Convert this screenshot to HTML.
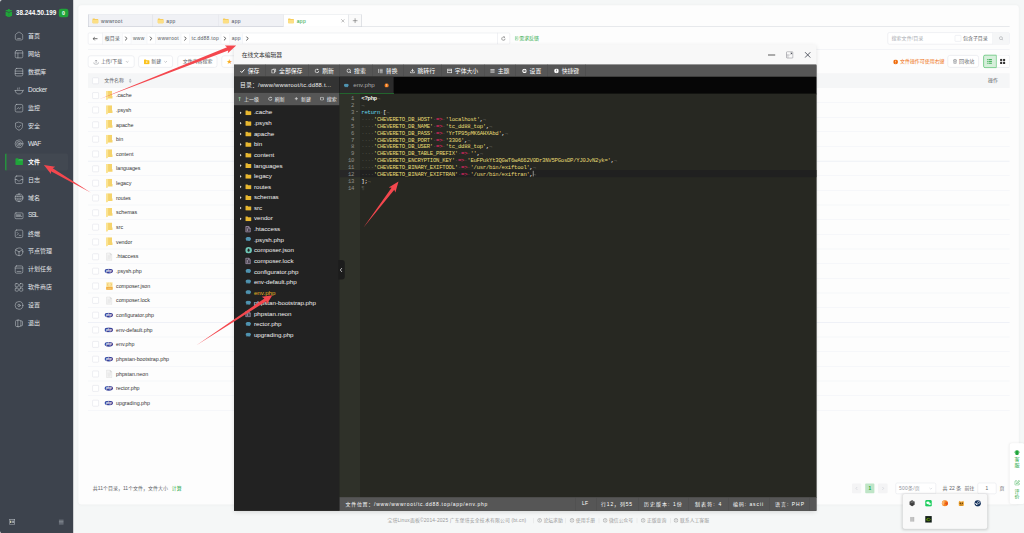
<!DOCTYPE html>
<html lang="zh-CN"><head><meta charset="utf-8"><title>宝塔Linux面板</title>
<style>
html,body{margin:0;padding:0;width:1024px;height:533px;overflow:hidden;background:#f5f7f7;}
#stage{position:absolute;left:0;top:0;width:2560px;height:1332.5px;transform:scale(.4);transform-origin:0 0;background:#f5f7f7;overflow:hidden;font-family:"Liberation Sans","Noto Sans CJK SC",sans-serif;}
.a{position:absolute;}
.t{white-space:nowrap;}
.code{font-family:"Liberation Mono",monospace;font-weight:normal;white-space:pre;}
.code i{font-style:normal;color:#55564f;font-weight:normal;}
.code s{text-decoration:none;color:#e6db74;}
.code b{color:#f92672;font-weight:normal;}
.code em{font-style:normal;color:#66d9ef;}
.code u{text-decoration:none;color:#f8f8f2;font-weight:bold;}
</style></head><body><div id="stage">
<div class="a " style="left:0.00px;top:0.00px;width:12.50px;height:1332.50px;background:#fff;"></div>
<div class="a " style="left:0.00px;top:0.00px;width:182.75px;height:1332.50px;background:#3d434d;border-radius:5.50px 0 0 5.50px;"></div>
<svg class="a" style="left:12.00px;top:22.00px;width:20.25px;height:21.50px;" viewBox="0 0 14 16"><path d="M7 0.5c1.2 0 2 .8 2 1.8 1.8-.6 4 .2 4.6 1.2L7 6 .4 3.5C1 2.5 3.2 1.7 5 2.3 5 1.3 5.8.5 7 .5z" fill="#20a53a"/><path d="M1 5l6 2.2L13 5v8l-6 2.6L1 13z" fill="#20a53a"/><path d="M7 7.2V15.6" stroke="#178a2f" stroke-width=".8"/></svg>
<div class="a t " style="left:40.00px;top:20.50px;height:23.62px;line-height:23.62px;font-size:15.75px;color:#fff;letter-spacing:0.001px;font-weight:bold;">38.244.50.199</div>
<div class="a " style="left:146.75px;top:22.00px;width:24.25px;height:20.75px;background:#20a53a;border-radius:5.75px;"></div>
<div class="a t " style="left:158.88px;transform:translateX(-50%);top:23.52px;height:19.88px;line-height:19.88px;font-size:13.25px;color:#fff;font-weight:bold;">0</div>
<svg class="a" style="left:34.00px;top:77.38px;width:27.00px;height:27.00px;" viewBox="0 0 20 20"><g fill="none" stroke="#c9cdd2" stroke-width="0.95" stroke-linecap="round" stroke-linejoin="round"><path d="M3.2 8.2C3.2 7 3.6 6.5 4.4 5.9L8.6 2.9c.9-.6 1.9-.6 2.8 0l4.2 3c.8.6 1.2 1.1 1.2 2.3v6.300c0 1.500-1 2.500-2.500 2.500H5.700c-1.500 0-2.500-1-2.500-2.500z"/><path d="M7.500 14.200h5"/></g></svg>
<div class="a t " style="left:70.00px;top:79.00px;height:22.50px;line-height:22.50px;font-size:15.00px;color:#e4e6e9;">首页</div>
<svg class="a" style="left:34.00px;top:122.23px;width:27.00px;height:27.00px;" viewBox="0 0 20 20"><g fill="none" stroke="#c9cdd2" stroke-width="0.95" stroke-linecap="round" stroke-linejoin="round"><rect x="3" y="3.200" width="14" height="13.600" rx="2.600"/><path d="M3 7.800h14M8 7.800v9"/></g></svg>
<div class="a t " style="left:70.00px;top:124.01px;height:22.50px;line-height:22.50px;font-size:15.00px;color:#e4e6e9;">网站</div>
<svg class="a" style="left:34.00px;top:167.07px;width:27.00px;height:27.00px;" viewBox="0 0 20 20"><g fill="none" stroke="#c9cdd2" stroke-width="0.95" stroke-linecap="round" stroke-linejoin="round"><rect x="3" y="3" width="14" height="14" rx="2.800"/><path d="M3 8h14M3 12.400h14"/></g></svg>
<div class="a t " style="left:70.00px;top:169.01px;height:22.50px;line-height:22.50px;font-size:15.00px;color:#e4e6e9;">数据库</div>
<svg class="a" style="left:34.00px;top:211.93px;width:27.00px;height:27.00px;" viewBox="0 0 20 20"><g fill="none" stroke="#c9cdd2" stroke-width="0.95" stroke-linecap="round" stroke-linejoin="round"><path d="M3 10.500h14c0 4-3 6.500-7 6.500s-7-2.500-7-6.500z"/><path d="M7 8.200c0-1.200 1-1.200 1-2.400M10 8.200c0-1.200 1-1.200 1-2.400M17 11.500c1.200 0 1.800-.8 1.800-1.600"/></g></svg>
<div class="a t " style="left:70.00px;top:212.00px;height:24.38px;line-height:24.38px;font-size:16.25px;color:#e4e6e9;letter-spacing:-0.664px;">Docker</div>
<svg class="a" style="left:34.00px;top:256.78px;width:27.00px;height:27.00px;" viewBox="0 0 20 20"><g fill="none" stroke="#c9cdd2" stroke-width="0.95" stroke-linecap="round" stroke-linejoin="round"><rect x="3" y="3" width="14" height="14" rx="2.800"/><path d="M6.200 11.500l2.300-2.600 2.600 2.400 2.700-3"/></g></svg>
<div class="a t " style="left:70.00px;top:259.01px;height:22.50px;line-height:22.50px;font-size:15.00px;color:#e4e6e9;">监控</div>
<svg class="a" style="left:34.00px;top:301.62px;width:27.00px;height:27.00px;" viewBox="0 0 20 20"><g fill="none" stroke="#c9cdd2" stroke-width="0.95" stroke-linecap="round" stroke-linejoin="round"><path d="M10 2.600l6.400 2.200v5.400c0 3.600-2.700 6-6.400 7.300-3.700-1.300-6.400-3.700-6.400-7.300V4.800z"/><path d="M7.200 10l2.100 2.100 3.600-3.800"/></g></svg>
<div class="a t " style="left:70.00px;top:304.00px;height:22.50px;line-height:22.50px;font-size:15.00px;color:#e4e6e9;">安全</div>
<svg class="a" style="left:34.00px;top:346.48px;width:27.00px;height:27.00px;" viewBox="0 0 20 20"><g fill="none" stroke="#c9cdd2" stroke-width="0.95" stroke-linecap="round" stroke-linejoin="round"><circle cx="10" cy="10" r="7.200"/><circle cx="10" cy="10" r="4.300"/><circle cx="10" cy="10" r="1.600"/></g></svg>
<div class="a t " style="left:70.00px;top:347.01px;height:24.38px;line-height:24.38px;font-size:16.25px;color:#e4e6e9;letter-spacing:-1.333px;">WAF</div>
<div class="a " style="left:12.50px;top:383.50px;width:157.50px;height:42.00px;background:#424851;border-radius:4.00px;"></div>
<div class="a " style="left:12.50px;top:383.50px;width:3.25px;height:42.00px;background:#20a53a;border-radius:2.50px 0 0 2.50px;"></div>
<svg class="a" style="left:36.50px;top:393.20px;width:22.00px;height:22.00px;" viewBox="0 0 20 20"><path d="M1.500 4.500c0-1.200.8-2 2-2h4l2 2.300h7c1.200 0 2 .8 2 2v9c0 1.200-.8 2-2 2h-13c-1.200 0-2-.8-2-2z" fill="#20a53a"/><path d="M9.800 4.800h6.700c1.200 0 2 .8 2 2v.5h-11z" fill="#3fc25a"/></svg>
<div class="a t " style="left:70.00px;top:394.01px;height:22.50px;line-height:22.50px;font-size:15.00px;color:#fff;font-weight:bold;">文件</div>
<svg class="a" style="left:34.00px;top:436.18px;width:27.00px;height:27.00px;" viewBox="0 0 20 20"><g fill="none" stroke="#c9cdd2" stroke-width="0.95" stroke-linecap="round" stroke-linejoin="round"><rect x="3" y="3" width="14" height="14" rx="2.800"/><path d="M3 9.500h3.500c.3 1.700 1.700 2.800 3.500 2.800s3.200-1.100 3.500-2.800H17"/></g></svg>
<div class="a t " style="left:70.00px;top:439.00px;height:22.50px;line-height:22.50px;font-size:15.00px;color:#e4e6e9;">日志</div>
<svg class="a" style="left:34.00px;top:481.02px;width:27.00px;height:27.00px;" viewBox="0 0 20 20"><g fill="none" stroke="#c9cdd2" stroke-width="0.95" stroke-linecap="round" stroke-linejoin="round"><circle cx="10" cy="10" r="7.200"/><path d="M2.800 8h14.400M2.800 12h14.400M10 2.800c-2.200 2-2.200 3.500-2.200 5M10 2.800c2.200 2 2.200 3.500 2.200 5M10 17.200c-2.200-2-2.200-3.500-2.200-5M10 17.200c2.200-2 2.200-3.500 2.200-5"/></g></svg>
<div class="a t " style="left:70.00px;top:484.01px;height:22.50px;line-height:22.50px;font-size:15.00px;color:#e4e6e9;">域名</div>
<svg class="a" style="left:34.00px;top:525.88px;width:27.00px;height:27.00px;" viewBox="0 0 20 20"><g fill="none" stroke="#c9cdd2" stroke-width="0.95" stroke-linecap="round" stroke-linejoin="round"><rect x="2.600" y="4.600" width="14.800" height="10.800" rx="1.800"/><path d="M5.200 8h2.400v1.600H5.200v1.800h2.400M9 8h2.400v1.600H9v1.800h2.400M13 8v3.400h2"/></g></svg>
<div class="a t " style="left:70.00px;top:524.52px;height:24.38px;line-height:24.38px;font-size:16.25px;color:#e4e6e9;letter-spacing:-2.323px;">SSL</div>
<svg class="a" style="left:34.00px;top:570.73px;width:27.00px;height:27.00px;" viewBox="0 0 20 20"><g fill="none" stroke="#c9cdd2" stroke-width="0.95" stroke-linecap="round" stroke-linejoin="round"><rect x="3" y="3" width="14" height="14" rx="2.800"/><path d="M6.500 7.500l2.500 2.500-2.500 2.500M10.500 13h3"/></g></svg>
<div class="a t " style="left:70.00px;top:574.01px;height:22.50px;line-height:22.50px;font-size:15.00px;color:#e4e6e9;">终端</div>
<svg class="a" style="left:34.00px;top:615.58px;width:27.00px;height:27.00px;" viewBox="0 0 20 20"><g fill="none" stroke="#c9cdd2" stroke-width="0.95" stroke-linecap="round" stroke-linejoin="round"><circle cx="10" cy="10" r="7.200"/><path d="M10 10v7.200M10 10L3.800 6.400M10 10l6.200-3.600"/></g></svg>
<div class="a t " style="left:70.00px;top:616.51px;height:22.50px;line-height:22.50px;font-size:15.00px;color:#e4e6e9;">节点管理</div>
<svg class="a" style="left:34.00px;top:660.43px;width:27.00px;height:27.00px;" viewBox="0 0 20 20"><g fill="none" stroke="#c9cdd2" stroke-width="0.95" stroke-linecap="round" stroke-linejoin="round"><rect x="3" y="3.600" width="14" height="13.400" rx="2.600"/><path d="M3 7.600h14M6.500 13.800h7"/></g></svg>
<div class="a t " style="left:70.00px;top:661.50px;height:22.50px;line-height:22.50px;font-size:15.00px;color:#e4e6e9;">计划任务</div>
<svg class="a" style="left:34.00px;top:705.28px;width:27.00px;height:27.00px;" viewBox="0 0 20 20"><g fill="none" stroke="#c9cdd2" stroke-width="0.95" stroke-linecap="round" stroke-linejoin="round"><rect x="3" y="3" width="5.800" height="5.800" rx="1.600"/><rect x="11.200" y="3" width="5.800" height="5.800" rx="1.600"/><rect x="3" y="11.200" width="5.800" height="5.800" rx="1.600"/><rect x="11.200" y="11.200" width="5.800" height="5.800" rx="1.600"/></g></svg>
<div class="a t " style="left:70.00px;top:706.51px;height:22.50px;line-height:22.50px;font-size:15.00px;color:#e4e6e9;">软件商店</div>
<svg class="a" style="left:34.00px;top:750.13px;width:27.00px;height:27.00px;" viewBox="0 0 20 20"><g fill="none" stroke="#c9cdd2" stroke-width="0.95" stroke-linecap="round" stroke-linejoin="round"><circle cx="10" cy="10" r="7.200"/><circle cx="10" cy="10" r="2.200"/></g></svg>
<div class="a t " style="left:70.00px;top:751.50px;height:22.50px;line-height:22.50px;font-size:15.00px;color:#e4e6e9;">设置</div>
<svg class="a" style="left:34.00px;top:794.98px;width:27.00px;height:27.00px;" viewBox="0 0 20 20"><g fill="none" stroke="#c9cdd2" stroke-width="0.95" stroke-linecap="round" stroke-linejoin="round"><path d="M8.500 3.400l5 1.600v10l-5 1.600z"/><path d="M8.500 4.200H5.600c-1.200 0-2 .8-2 2v7.600c0 1.200.8 2 2 2h2.900M13.500 5.500H15c.9 0 1.500.6 1.500 1.500v6c0 .9-.6 1.500-1.500 1.500h-1.500"/></g></svg>
<div class="a t " style="left:70.00px;top:796.51px;height:22.50px;line-height:22.50px;font-size:15.00px;color:#e4e6e9;">退出</div>
<svg class="a" style="left:23.00px;top:1297.25px;width:14.50px;height:15.00px;" viewBox="0 0 12 12"><rect x=".6" y=".8" width="10.800" height="10.400" fill="none" stroke="#b9bec5" stroke-width="1.200"/><rect x="1.800" y="3.600" width="2.600" height="4.800" fill="#d8d4b0"/><rect x="6" y="3.600" width="4.200" height="4.800" fill="#9aa0a8"/></svg>
<svg class="a" style="left:146.00px;top:1297.50px;width:14.00px;height:14.50px;" viewBox="0 0 12 12"><path d="M1 1.800h10M1 4.600h10M1 7.400h10M1 10.200h10" stroke="#8e949c" stroke-width="1.700"/></svg>
<div class="a " style="left:196.25px;top:12.50px;width:2350.75px;height:1248.00px;background:#fdfdfd;border-radius:7.50px;box-shadow:0 0 7.50px rgba(0,0,0,.04);"></div>
<div class="a " style="left:220.00px;top:65.38px;width:2303.50px;height:1.12px;background:#c4c9d1;"></div>
<div class="a " style="left:220.00px;top:36.25px;width:163.00px;height:30.25px;background:#f0f1f5;border:1px solid #b9bec7;border-top-color:#dde0e5;box-sizing:border-box;"></div>
<svg class="a" style="left:229.75px;top:44.00px;width:17.00px;height:15.50px;" viewBox="0 0 17 16"><path d="M1 3.500c0-.8.500-1.300 1.300-1.300h4l1.500 1.600h7c.8 0 1.200.5 1.200 1.300v8.400c0 .8-.4 1.300-1.200 1.300H2.300c-.8 0-1.300-.5-1.300-1.300z" fill="#f7cd5c"/><path d="M1 6h15v7.500c0 .8-.4 1.300-1.200 1.300H2.300c-.8 0-1.300-.5-1.300-1.300z" fill="#fcdf85"/></svg>
<div class="a t " style="left:252.75px;top:44.50px;height:18.56px;line-height:18.56px;font-size:12.38px;color:#4a4e55;letter-spacing:0.801px;">wwwroot</div>
<div class="a " style="left:383.00px;top:36.25px;width:163.00px;height:30.25px;background:#f0f1f5;border:1px solid #b9bec7;border-top-color:#dde0e5;box-sizing:border-box;border-left:none;"></div>
<svg class="a" style="left:392.75px;top:44.00px;width:17.00px;height:15.50px;" viewBox="0 0 17 16"><path d="M1 3.500c0-.8.500-1.300 1.300-1.300h4l1.500 1.600h7c.8 0 1.200.5 1.200 1.300v8.400c0 .8-.4 1.300-1.200 1.300H2.300c-.8 0-1.300-.5-1.300-1.300z" fill="#f7cd5c"/><path d="M1 6h15v7.500c0 .8-.4 1.300-1.200 1.300H2.300c-.8 0-1.300-.5-1.300-1.300z" fill="#fcdf85"/></svg>
<div class="a t " style="left:415.75px;top:44.50px;height:18.56px;line-height:18.56px;font-size:12.38px;color:#4a4e55;letter-spacing:0.948px;">app</div>
<div class="a " style="left:546.00px;top:36.25px;width:163.00px;height:30.25px;background:#f0f1f5;border:1px solid #b9bec7;border-top-color:#dde0e5;box-sizing:border-box;border-left:none;"></div>
<svg class="a" style="left:555.75px;top:44.00px;width:17.00px;height:15.50px;" viewBox="0 0 17 16"><path d="M1 3.500c0-.8.500-1.300 1.300-1.300h4l1.500 1.600h7c.8 0 1.200.5 1.200 1.300v8.400c0 .8-.4 1.300-1.200 1.300H2.300c-.8 0-1.300-.5-1.300-1.300z" fill="#f7cd5c"/><path d="M1 6h15v7.500c0 .8-.4 1.300-1.200 1.300H2.300c-.8 0-1.300-.5-1.300-1.300z" fill="#fcdf85"/></svg>
<div class="a t " style="left:578.75px;top:44.50px;height:18.56px;line-height:18.56px;font-size:12.38px;color:#4a4e55;letter-spacing:0.948px;">app</div>
<div class="a " style="left:709.00px;top:36.25px;width:163.00px;height:30.25px;background:#fff;border:1px solid #b9bec7;border-top-color:#dde0e5;box-sizing:border-box;border-bottom-color:#fff;border-left:none;"></div>
<svg class="a" style="left:718.75px;top:44.00px;width:17.00px;height:15.50px;" viewBox="0 0 17 16"><path d="M1 3.500c0-.8.500-1.300 1.300-1.300h4l1.500 1.600h7c.8 0 1.200.5 1.200 1.300v8.400c0 .8-.4 1.300-1.200 1.300H2.300c-.8 0-1.300-.5-1.300-1.300z" fill="#f7cd5c"/><path d="M1 6h15v7.500c0 .8-.4 1.300-1.200 1.300H2.300c-.8 0-1.300-.5-1.300-1.300z" fill="#fcdf85"/></svg>
<div class="a t " style="left:741.75px;top:44.50px;height:18.56px;line-height:18.56px;font-size:12.38px;color:#20a53a;letter-spacing:0.948px;">app</div>
<svg class="a" style="left:851.50px;top:46.50px;width:10.50px;height:10.50px;" viewBox="0 0 10 10"><path d="M1 1l8 8M9 1L1 9" stroke="#777" stroke-width="1.1"/></svg>
<div class="a " style="left:872.00px;top:36.25px;width:31.50px;height:30.25px;background:#fafafa;border:1px solid #b9bec7;border-top-color:#dde0e5;border-left:none;box-sizing:border-box;"></div>
<svg class="a" style="left:881.25px;top:44.75px;width:13.50px;height:13.50px;" viewBox="0 0 10 10"><path d="M5 .5v9M.5 5h9" stroke="#555" stroke-width="0.95"/></svg>
<div class="a " style="left:220.00px;top:81.50px;width:1054.50px;height:29.25px;background:#fff;border:1px solid #dcdfe6;box-sizing:border-box;border-radius:3.00px;"></div>
<div class="a " style="left:255.75px;top:81.50px;width:1.00px;height:29.25px;background:#dcdfe6;"></div>
<svg class="a" style="left:230.75px;top:90.50px;width:14.00px;height:11.50px;" viewBox="0 0 14 12"><path d="M13 6H2M6 1.500L1.500 6 6 10.500" fill="none" stroke="#444" stroke-width="2"/></svg>
<div class="a " style="left:256.25px;top:82.75px;width:49.50px;height:26.75px;background:#fafbfc;border-left:1px solid #eceef2;border-right:1px solid #eceef2;box-sizing:border-box;"></div>
<div class="a t " style="left:262.00px;top:87.00px;height:18.56px;line-height:18.56px;font-size:12.38px;color:#555960;">根目录</div>
<div class="a " style="left:326.50px;top:82.75px;width:41.00px;height:26.75px;background:#fafbfc;border-left:1px solid #eceef2;border-right:1px solid #eceef2;box-sizing:border-box;"></div>
<div class="a t " style="left:332.25px;top:87.00px;height:18.56px;line-height:18.56px;font-size:12.38px;color:#555960;letter-spacing:0.979px;">www</div>
<div class="a " style="left:388.00px;top:82.75px;width:65.00px;height:26.75px;background:#fafbfc;border-left:1px solid #eceef2;border-right:1px solid #eceef2;box-sizing:border-box;"></div>
<div class="a t " style="left:393.75px;top:87.00px;height:18.56px;line-height:18.56px;font-size:12.38px;color:#555960;letter-spacing:0.801px;">wwwroot</div>
<div class="a " style="left:473.25px;top:82.75px;width:79.50px;height:26.75px;background:#fafbfc;border-left:1px solid #eceef2;border-right:1px solid #eceef2;box-sizing:border-box;"></div>
<div class="a t " style="left:479.00px;top:87.00px;height:18.56px;line-height:18.56px;font-size:12.38px;color:#555960;letter-spacing:0.636px;">tc.dd88.top</div>
<div class="a " style="left:573.75px;top:82.75px;width:33.50px;height:26.75px;background:#fafbfc;border-left:1px solid #eceef2;border-right:1px solid #eceef2;box-sizing:border-box;"></div>
<div class="a t " style="left:579.50px;top:87.00px;height:18.56px;line-height:18.56px;font-size:12.38px;color:#555960;letter-spacing:0.531px;">app</div>
<svg class="a" style="left:311.25px;top:90.00px;width:8.00px;height:12.50px;" viewBox="0 0 8 12"><path d="M1.800 1.200L6.600 6 1.800 10.800" fill="none" stroke="#333" stroke-width="2.100"/></svg>
<svg class="a" style="left:373.25px;top:90.00px;width:8.00px;height:12.50px;" viewBox="0 0 8 12"><path d="M1.800 1.200L6.600 6 1.800 10.800" fill="none" stroke="#333" stroke-width="2.100"/></svg>
<svg class="a" style="left:459.25px;top:90.00px;width:8.00px;height:12.50px;" viewBox="0 0 8 12"><path d="M1.800 1.200L6.600 6 1.800 10.800" fill="none" stroke="#333" stroke-width="2.100"/></svg>
<svg class="a" style="left:558.25px;top:90.00px;width:8.00px;height:12.50px;" viewBox="0 0 8 12"><path d="M1.800 1.200L6.600 6 1.800 10.800" fill="none" stroke="#333" stroke-width="2.100"/></svg>
<svg class="a" style="left:613.50px;top:90.00px;width:8.00px;height:12.50px;" viewBox="0 0 8 12"><path d="M1.800 1.200L6.600 6 1.800 10.800" fill="none" stroke="#333" stroke-width="2.100"/></svg>
<div class="a " style="left:1242.50px;top:81.50px;width:1.00px;height:29.25px;background:#dcdfe6;"></div>
<svg class="a" style="left:1251.75px;top:89.75px;width:13.00px;height:13.00px;" viewBox="0 0 14 14"><path d="M11.500 7A4.500 4.500 0 1 1 9.800 3.500" fill="none" stroke="#555" stroke-width="1.400"/><path d="M8.500 1l2.800 2.300-3 1.600z" fill="#555"/></svg>
<svg class="a" style="left:1286.50px;top:91.00px;width:9.00px;height:10.00px;" viewBox="0 0 10 11"><rect x=".8" y=".8" width="8.400" height="9.400" fill="none" stroke="#20a53a" stroke-width="1.200"/><path d="M2.800 3.500h4.400M2.800 6h4.400" stroke="#20a53a" stroke-width="1"/></svg>
<div class="a t " style="left:1298.00px;top:87.00px;height:18.56px;line-height:18.56px;font-size:12.38px;color:#20a53a;">需求反馈</div>
<div class="a " style="left:2218.75px;top:80.75px;width:304.75px;height:30.25px;background:#fff;border:1px solid #dcdfe6;box-sizing:border-box;border-radius:4.00px;"></div>
<div class="a " style="left:2481.25px;top:81.25px;width:41.75px;height:29.25px;background:#f5f6f7;border-left:1px solid #dcdfe6;box-sizing:border-box;border-radius:0 4.00px 4.00px 0;"></div>
<div class="a t " style="left:2228.50px;top:87.00px;height:18.56px;line-height:18.56px;font-size:12.38px;color:#a8abb2;letter-spacing:0.328px;">搜索文件/目录</div>
<div class="a " style="left:2386.75px;top:88.00px;width:16.00px;height:16.00px;background:#fff;border:1px solid #dcdfe6;box-sizing:border-box;border-radius:2.00px;"></div>
<div class="a t " style="left:2407.50px;top:87.00px;height:18.56px;line-height:18.56px;font-size:12.38px;color:#606266;">包含子目录</div>
<svg class="a" style="left:2496.50px;top:89.75px;width:12.50px;height:12.50px;" viewBox="0 0 14 14"><circle cx="6" cy="6" r="4.200" fill="none" stroke="#909399" stroke-width="1.300"/><path d="M9.200 9.200l3 3" stroke="#909399" stroke-width="1.300"/></svg>
<div class="a " style="left:220.00px;top:123.25px;width:2303.50px;height:1.12px;background:#e4e7ed;"></div>
<div class="a " style="left:220.00px;top:139.00px;width:116.00px;height:29.50px;background:#fff;border:1px solid #d9dce4;box-sizing:border-box;border-radius:6.00px;"></div>
<svg class="a" style="left:233.00px;top:147.75px;width:14.50px;height:14.00px;" viewBox="0 0 12 12"><path d="M6 8.500V2M3.600 4.200L6 1.800l2.400 2.400M1 6.800c-.5 2.800 1.500 4.200 5 4.200s5.500-1.400 5-4.200" fill="none" stroke="#70747c" stroke-width="1"/></svg>
<div class="a t " style="left:252.25px;top:144.50px;height:18.56px;line-height:18.56px;font-size:12.38px;color:#606266;">上传/下载</div>
<svg class="a" style="left:313.25px;top:150.75px;width:10.00px;height:7.00px;" viewBox="0 0 10 7"><path d="M1.500 1.500L5 5l3.500-3.500" fill="none" stroke="#909399" stroke-width="1.200"/></svg>
<div class="a " style="left:346.00px;top:139.00px;width:86.00px;height:29.50px;background:#fff;border:1px solid #d9dce4;box-sizing:border-box;border-radius:6.00px;"></div>
<svg class="a" style="left:359.00px;top:146.50px;width:15.50px;height:14.50px;" viewBox="0 0 17 16"><path d="M1 3.500c0-.8.500-1.300 1.300-1.300h4l1.500 1.600h7c.8 0 1.200.5 1.200 1.300v8.400c0 .8-.4 1.300-1.200 1.300H2.300c-.8 0-1.300-.5-1.300-1.300z" fill="#fbc21c"/><path d="M8.500 6.500v5M6 9h5" stroke="#fff" stroke-width="1.400"/></svg>
<div class="a t " style="left:378.25px;top:144.50px;height:18.56px;line-height:18.56px;font-size:12.38px;color:#606266;">新建</div>
<svg class="a" style="left:408.75px;top:150.75px;width:10.00px;height:7.00px;" viewBox="0 0 10 7"><path d="M1.500 1.500L5 5l3.500-3.500" fill="none" stroke="#909399" stroke-width="1.200"/></svg>
<div class="a " style="left:444.00px;top:139.00px;width:99.25px;height:29.50px;background:#fff;border:1px solid #d9dce4;box-sizing:border-box;border-radius:6.00px;"></div>
<div class="a t " style="left:493.75px;transform:translateX(-50%);top:144.50px;height:18.56px;line-height:18.56px;font-size:12.38px;color:#606266;">文件内容搜索</div>
<div class="a " style="left:554.25px;top:139.00px;width:100.75px;height:29.50px;background:#fff;border:1px solid #d9dce4;box-sizing:border-box;border-radius:6.00px;"></div>
<div class="a t " style="left:574.00px;transform:translateX(-50%);top:142.50px;height:21.00px;line-height:21.00px;font-size:14.00px;color:#f7a928;">★</div>
<svg class="a" style="left:2232.75px;top:148.75px;width:12.00px;height:12.00px;" viewBox="0 0 12 12"><circle cx="6" cy="6" r="6" fill="#ef6c0c"/><path d="M6 2.800v4M6 8.300v1.200" stroke="#fff" stroke-width="1.500"/></svg>
<div class="a t " style="left:2250.00px;top:144.50px;height:18.56px;line-height:18.56px;font-size:12.38px;color:#ef6c0c;">文件操作可使用右键</div>
<div class="a " style="left:2369.00px;top:138.25px;width:78.00px;height:30.50px;background:#fff;border:1px solid #d9dce4;box-sizing:border-box;border-radius:6.00px;"></div>
<svg class="a" style="left:2382.00px;top:147.25px;width:11.00px;height:12.50px;" viewBox="0 0 11 12"><path d="M.8 3h9.400M3.800 3V1.300h3.400V3M2 3l.5 8.200h6L9 3M4.500 5.200v3.800M6.500 5.200v3.800" fill="none" stroke="#6a6e76" stroke-width="1.100"/></svg>
<div class="a t " style="left:2397.75px;top:144.52px;height:18.94px;line-height:18.94px;font-size:12.62px;color:#606266;">回收站</div>
<div class="a " style="left:2457.50px;top:137.25px;width:34.25px;height:32.50px;background:#d6efdb;border:2px solid #62c477;box-sizing:border-box;border-radius:4.50px 0 0 4.50px;"></div>
<svg class="a" style="left:2467.25px;top:146.75px;width:13.00px;height:13.00px;" viewBox="0 0 12 12"><path d="M3.800 1.800h8M3.800 6h8M3.800 10.200h8" stroke="#25a541" stroke-width="2"/><path d="M.3 1.800h2M.3 6h2M.3 10.200h2" stroke="#25a541" stroke-width="2"/></svg>
<div class="a " style="left:2491.50px;top:137.25px;width:32.25px;height:32.50px;background:#fff;border:1px solid #d9dce4;border-left:none;box-sizing:border-box;border-radius:0 4.50px 4.50px 0;"></div>
<svg class="a" style="left:2500.25px;top:147.25px;width:13.25px;height:12.75px;" viewBox="0 0 12 12"><rect x="0" y="0" width="5" height="5" rx=".6" fill="#3a3a3a"/><rect x="7" y="0" width="5" height="5" rx=".6" fill="#333"/><rect x="0" y="7" width="5" height="5" rx=".6" fill="#333"/><rect x="7" y="7" width="5" height="5" rx=".6" fill="#333"/></svg>
<div class="a " style="left:220.00px;top:183.25px;width:2303.50px;height:37.00px;background:#f5f6f7;"></div>
<div class="a " style="left:230.50px;top:194.00px;width:16.00px;height:16.00px;background:#fff;border:1px solid #d4d7e0;box-sizing:border-box;border-radius:2.00px;"></div>
<div class="a t " style="left:260.50px;top:192.00px;height:18.56px;line-height:18.56px;font-size:12.38px;color:#606266;">文件名称</div>
<svg class="a" style="left:321.00px;top:195.50px;width:9.00px;height:12.00px;" viewBox="0 0 7 10"><path d="M3.500 .3L6.600 4.200H.4zM3.500 9.700L.4 5.800h6.200z" fill="#b4b8c1"/></svg>
<div class="a t " style="left:2470.00px;top:192.00px;height:18.56px;line-height:18.56px;font-size:12.38px;color:#606266;">操作</div>
<div class="a " style="left:220.00px;top:255.89px;width:2303.50px;height:1.12px;background:#ebeef5;"></div>
<div class="a " style="left:230.50px;top:230.57px;width:16.00px;height:16.00px;background:#fff;border:1px solid #d4d7e0;box-sizing:border-box;border-radius:2.00px;"></div>
<svg class="a" style="left:265.00px;top:226.69px;width:16.50px;height:23.62px;" viewBox="0 0 6.6 9.45"><path d="M1.800 0h4.200v7.700H1.800z" fill="#f5d36c"/><path d="M6 5.200h.6v2.500H6z" fill="#f5d36c"/><path d="M0 .2c0-.1.100-.2.200-.2h1.900v8.300L1 9.400c-.1.100-.3.100-.4 0L0 8.600z" fill="#fbe392"/></svg>
<div class="a t " style="left:290.00px;top:228.51px;height:19.88px;line-height:19.88px;font-size:13.25px;color:#333;">.cache</div>
<div class="a " style="left:220.00px;top:292.52px;width:2303.50px;height:1.12px;background:#ebeef5;"></div>
<div class="a " style="left:230.50px;top:267.21px;width:16.00px;height:16.00px;background:#fff;border:1px solid #d4d7e0;box-sizing:border-box;border-radius:2.00px;"></div>
<svg class="a" style="left:265.00px;top:263.33px;width:16.50px;height:23.62px;" viewBox="0 0 6.6 9.45"><path d="M1.800 0h4.200v7.700H1.800z" fill="#f5d36c"/><path d="M6 5.200h.6v2.500H6z" fill="#f5d36c"/><path d="M0 .2c0-.1.100-.2.200-.2h1.900v8.300L1 9.400c-.1.100-.3.100-.4 0L0 8.600z" fill="#fbe392"/></svg>
<div class="a t " style="left:290.00px;top:266.01px;height:19.88px;line-height:19.88px;font-size:13.25px;color:#333;">.psysh</div>
<div class="a " style="left:220.00px;top:329.16px;width:2303.50px;height:1.12px;background:#ebeef5;"></div>
<div class="a " style="left:230.50px;top:303.84px;width:16.00px;height:16.00px;background:#fff;border:1px solid #d4d7e0;box-sizing:border-box;border-radius:2.00px;"></div>
<svg class="a" style="left:265.00px;top:299.97px;width:16.50px;height:23.62px;" viewBox="0 0 6.6 9.45"><path d="M1.800 0h4.200v7.700H1.800z" fill="#f5d36c"/><path d="M6 5.200h.6v2.500H6z" fill="#f5d36c"/><path d="M0 .2c0-.1.100-.2.200-.2h1.900v8.300L1 9.400c-.1.100-.3.100-.4 0L0 8.600z" fill="#fbe392"/></svg>
<div class="a t " style="left:290.00px;top:303.50px;height:19.88px;line-height:19.88px;font-size:13.25px;color:#333;">apache</div>
<div class="a " style="left:220.00px;top:365.80px;width:2303.50px;height:1.12px;background:#ebeef5;"></div>
<div class="a " style="left:230.50px;top:340.48px;width:16.00px;height:16.00px;background:#fff;border:1px solid #d4d7e0;box-sizing:border-box;border-radius:2.00px;"></div>
<svg class="a" style="left:265.00px;top:336.61px;width:16.50px;height:23.62px;" viewBox="0 0 6.6 9.45"><path d="M1.800 0h4.200v7.700H1.800z" fill="#f5d36c"/><path d="M6 5.200h.6v2.500H6z" fill="#f5d36c"/><path d="M0 .2c0-.1.100-.2.200-.2h1.900v8.300L1 9.400c-.1.100-.3.100-.4 0L0 8.600z" fill="#fbe392"/></svg>
<div class="a t " style="left:290.00px;top:338.50px;height:19.88px;line-height:19.88px;font-size:13.25px;color:#333;">bin</div>
<div class="a " style="left:220.00px;top:402.44px;width:2303.50px;height:1.12px;background:#ebeef5;"></div>
<div class="a " style="left:230.50px;top:377.12px;width:16.00px;height:16.00px;background:#fff;border:1px solid #d4d7e0;box-sizing:border-box;border-radius:2.00px;"></div>
<svg class="a" style="left:265.00px;top:373.24px;width:16.50px;height:23.62px;" viewBox="0 0 6.6 9.45"><path d="M1.800 0h4.200v7.700H1.800z" fill="#f5d36c"/><path d="M6 5.200h.6v2.500H6z" fill="#f5d36c"/><path d="M0 .2c0-.1.100-.2.200-.2h1.900v8.300L1 9.400c-.1.100-.3.100-.4 0L0 8.600z" fill="#fbe392"/></svg>
<div class="a t " style="left:290.00px;top:376.01px;height:19.88px;line-height:19.88px;font-size:13.25px;color:#333;">content</div>
<div class="a " style="left:220.00px;top:439.07px;width:2303.50px;height:1.12px;background:#ebeef5;"></div>
<div class="a " style="left:230.50px;top:413.76px;width:16.00px;height:16.00px;background:#fff;border:1px solid #d4d7e0;box-sizing:border-box;border-radius:2.00px;"></div>
<svg class="a" style="left:265.00px;top:409.88px;width:16.50px;height:23.62px;" viewBox="0 0 6.6 9.45"><path d="M1.800 0h4.200v7.700H1.800z" fill="#f5d36c"/><path d="M6 5.200h.6v2.500H6z" fill="#f5d36c"/><path d="M0 .2c0-.1.100-.2.200-.2h1.900v8.300L1 9.400c-.1.100-.3.100-.4 0L0 8.600z" fill="#fbe392"/></svg>
<div class="a t " style="left:290.00px;top:411.01px;height:19.88px;line-height:19.88px;font-size:13.25px;color:#333;">languages</div>
<div class="a " style="left:220.00px;top:475.71px;width:2303.50px;height:1.12px;background:#ebeef5;"></div>
<div class="a " style="left:230.50px;top:450.39px;width:16.00px;height:16.00px;background:#fff;border:1px solid #d4d7e0;box-sizing:border-box;border-radius:2.00px;"></div>
<svg class="a" style="left:265.00px;top:446.52px;width:16.50px;height:23.62px;" viewBox="0 0 6.6 9.45"><path d="M1.800 0h4.200v7.700H1.800z" fill="#f5d36c"/><path d="M6 5.200h.6v2.500H6z" fill="#f5d36c"/><path d="M0 .2c0-.1.100-.2.200-.2h1.900v8.300L1 9.400c-.1.100-.3.100-.4 0L0 8.600z" fill="#fbe392"/></svg>
<div class="a t " style="left:290.00px;top:448.51px;height:19.88px;line-height:19.88px;font-size:13.25px;color:#333;">legacy</div>
<div class="a " style="left:220.00px;top:512.35px;width:2303.50px;height:1.12px;background:#ebeef5;"></div>
<div class="a " style="left:230.50px;top:487.03px;width:16.00px;height:16.00px;background:#fff;border:1px solid #d4d7e0;box-sizing:border-box;border-radius:2.00px;"></div>
<svg class="a" style="left:265.00px;top:483.16px;width:16.50px;height:23.62px;" viewBox="0 0 6.6 9.45"><path d="M1.800 0h4.200v7.700H1.800z" fill="#f5d36c"/><path d="M6 5.200h.6v2.500H6z" fill="#f5d36c"/><path d="M0 .2c0-.1.100-.2.200-.2h1.900v8.300L1 9.400c-.1.100-.3.100-.4 0L0 8.600z" fill="#fbe392"/></svg>
<div class="a t " style="left:290.00px;top:486.00px;height:19.88px;line-height:19.88px;font-size:13.25px;color:#333;">routes</div>
<div class="a " style="left:220.00px;top:548.99px;width:2303.50px;height:1.12px;background:#ebeef5;"></div>
<div class="a " style="left:230.50px;top:523.67px;width:16.00px;height:16.00px;background:#fff;border:1px solid #d4d7e0;box-sizing:border-box;border-radius:2.00px;"></div>
<svg class="a" style="left:265.00px;top:519.79px;width:16.50px;height:23.62px;" viewBox="0 0 6.6 9.45"><path d="M1.800 0h4.200v7.700H1.800z" fill="#f5d36c"/><path d="M6 5.200h.6v2.500H6z" fill="#f5d36c"/><path d="M0 .2c0-.1.100-.2.200-.2h1.900v8.300L1 9.400c-.1.100-.3.100-.4 0L0 8.600z" fill="#fbe392"/></svg>
<div class="a t " style="left:290.00px;top:521.00px;height:19.88px;line-height:19.88px;font-size:13.25px;color:#333;">schemas</div>
<div class="a " style="left:220.00px;top:585.62px;width:2303.50px;height:1.12px;background:#ebeef5;"></div>
<div class="a " style="left:230.50px;top:560.31px;width:16.00px;height:16.00px;background:#fff;border:1px solid #d4d7e0;box-sizing:border-box;border-radius:2.00px;"></div>
<svg class="a" style="left:265.00px;top:556.43px;width:16.50px;height:23.62px;" viewBox="0 0 6.6 9.45"><path d="M1.800 0h4.200v7.700H1.800z" fill="#f5d36c"/><path d="M6 5.200h.6v2.500H6z" fill="#f5d36c"/><path d="M0 .2c0-.1.100-.2.200-.2h1.900v8.300L1 9.400c-.1.100-.3.100-.4 0L0 8.600z" fill="#fbe392"/></svg>
<div class="a t " style="left:290.00px;top:558.51px;height:19.88px;line-height:19.88px;font-size:13.25px;color:#333;">src</div>
<div class="a " style="left:220.00px;top:622.26px;width:2303.50px;height:1.12px;background:#ebeef5;"></div>
<div class="a " style="left:230.50px;top:596.94px;width:16.00px;height:16.00px;background:#fff;border:1px solid #d4d7e0;box-sizing:border-box;border-radius:2.00px;"></div>
<svg class="a" style="left:265.00px;top:593.07px;width:16.50px;height:23.62px;" viewBox="0 0 6.6 9.45"><path d="M1.800 0h4.200v7.700H1.800z" fill="#f5d36c"/><path d="M6 5.200h.6v2.500H6z" fill="#f5d36c"/><path d="M0 .2c0-.1.100-.2.200-.2h1.900v8.300L1 9.400c-.1.100-.3.100-.4 0L0 8.600z" fill="#fbe392"/></svg>
<div class="a t " style="left:290.00px;top:596.01px;height:19.88px;line-height:19.88px;font-size:13.25px;color:#333;">vendor</div>
<div class="a " style="left:220.00px;top:658.90px;width:2303.50px;height:1.12px;background:#ebeef5;"></div>
<div class="a " style="left:230.50px;top:633.58px;width:16.00px;height:16.00px;background:#fff;border:1px solid #d4d7e0;box-sizing:border-box;border-radius:2.00px;"></div>
<svg class="a" style="left:264.75px;top:631.08px;width:16.50px;height:21.00px;" viewBox="0 0 15 20"><path d="M1 1h8.500L14 5.500V19H1z" fill="#f4f4f4" stroke="#cfcfcf" stroke-width=".8"/><path d="M9.500 1v4.500H14" fill="#e4e4e4" stroke="#cfcfcf" stroke-width=".8"/><path d="M3.500 8h8M3.500 10.500h8M3.500 13h8M3.500 15.500h6" stroke="#d9d9d9" stroke-width=".9"/></svg>
<div class="a t " style="left:290.00px;top:631.01px;height:19.88px;line-height:19.88px;font-size:13.25px;color:#333;">.htaccess</div>
<div class="a " style="left:220.00px;top:695.54px;width:2303.50px;height:1.12px;background:#ebeef5;"></div>
<div class="a " style="left:230.50px;top:670.22px;width:16.00px;height:16.00px;background:#fff;border:1px solid #d4d7e0;box-sizing:border-box;border-radius:2.00px;"></div>
<svg class="a" style="left:261.25px;top:671.22px;width:22.00px;height:13.50px;" viewBox="0 0 20 12"><ellipse cx="10" cy="6" rx="9.600" ry="5.400" fill="#39439a"/><text x="10" y="8.400" font-size="7" font-weight="bold" font-style="italic" text-anchor="middle" fill="#fff" font-family="Liberation Sans, sans-serif">php</text></svg>
<div class="a t " style="left:290.00px;top:668.50px;height:19.88px;line-height:19.88px;font-size:13.25px;color:#333;">.psysh.php</div>
<div class="a " style="left:220.00px;top:732.17px;width:2303.50px;height:1.12px;background:#ebeef5;"></div>
<div class="a " style="left:230.50px;top:706.86px;width:16.00px;height:16.00px;background:#fff;border:1px solid #d4d7e0;box-sizing:border-box;border-radius:2.00px;"></div>
<svg class="a" style="left:264.50px;top:704.86px;width:17.50px;height:20.00px;" viewBox="0 0 15 17.2"><path d="M.5 .5h14v16H.5z" fill="#fbe6a2"/><path d="M5 2.500c-1 0-1.200.5-1.200 1.500s0 1.500-1 1.500c1 0 1 .5 1 1.500s.2 1.500 1.200 1.500M10 2.500c1 0 1.200.5 1.200 1.500s0 1.500 1 1.500c-1 0-1 .5-1 1.500s-.2 1.500-1.200 1.500" fill="none" stroke="#edb84e" stroke-width="1"/><rect x=".5" y="10.500" width="14" height="6" fill="#f2a93b"/><path d="M3 13.500h9" stroke="#fbe6a2" stroke-width="1.200"/></svg>
<div class="a t " style="left:290.00px;top:706.00px;height:19.88px;line-height:19.88px;font-size:13.25px;color:#333;">composer.json</div>
<div class="a " style="left:220.00px;top:768.81px;width:2303.50px;height:1.12px;background:#ebeef5;"></div>
<div class="a " style="left:230.50px;top:743.49px;width:16.00px;height:16.00px;background:#fff;border:1px solid #d4d7e0;box-sizing:border-box;border-radius:2.00px;"></div>
<svg class="a" style="left:264.75px;top:740.99px;width:16.50px;height:21.00px;" viewBox="0 0 15 20"><path d="M1 1h8.500L14 5.500V19H1z" fill="#f4f4f4" stroke="#cfcfcf" stroke-width=".8"/><path d="M9.500 1v4.500H14" fill="#e4e4e4" stroke="#cfcfcf" stroke-width=".8"/><path d="M3.500 8h8M3.500 10.500h8M3.500 13h8M3.500 15.500h6" stroke="#d9d9d9" stroke-width=".9"/></svg>
<div class="a t " style="left:290.00px;top:741.01px;height:19.88px;line-height:19.88px;font-size:13.25px;color:#333;">composer.lock</div>
<div class="a " style="left:220.00px;top:805.45px;width:2303.50px;height:1.12px;background:#ebeef5;"></div>
<div class="a " style="left:230.50px;top:780.13px;width:16.00px;height:16.00px;background:#fff;border:1px solid #d4d7e0;box-sizing:border-box;border-radius:2.00px;"></div>
<svg class="a" style="left:261.25px;top:781.13px;width:22.00px;height:13.50px;" viewBox="0 0 20 12"><ellipse cx="10" cy="6" rx="9.600" ry="5.400" fill="#39439a"/><text x="10" y="8.400" font-size="7" font-weight="bold" font-style="italic" text-anchor="middle" fill="#fff" font-family="Liberation Sans, sans-serif">php</text></svg>
<div class="a t " style="left:290.00px;top:778.51px;height:19.88px;line-height:19.88px;font-size:13.25px;color:#333;">configurator.php</div>
<div class="a " style="left:220.00px;top:842.09px;width:2303.50px;height:1.12px;background:#ebeef5;"></div>
<div class="a " style="left:230.50px;top:816.77px;width:16.00px;height:16.00px;background:#fff;border:1px solid #d4d7e0;box-sizing:border-box;border-radius:2.00px;"></div>
<svg class="a" style="left:261.25px;top:817.77px;width:22.00px;height:13.50px;" viewBox="0 0 20 12"><ellipse cx="10" cy="6" rx="9.600" ry="5.400" fill="#39439a"/><text x="10" y="8.400" font-size="7" font-weight="bold" font-style="italic" text-anchor="middle" fill="#fff" font-family="Liberation Sans, sans-serif">php</text></svg>
<div class="a t " style="left:290.00px;top:816.01px;height:19.88px;line-height:19.88px;font-size:13.25px;color:#333;">env-default.php</div>
<div class="a " style="left:220.00px;top:878.73px;width:2303.50px;height:1.12px;background:#ebeef5;"></div>
<div class="a " style="left:230.50px;top:853.41px;width:16.00px;height:16.00px;background:#fff;border:1px solid #d4d7e0;box-sizing:border-box;border-radius:2.00px;"></div>
<svg class="a" style="left:261.25px;top:854.41px;width:22.00px;height:13.50px;" viewBox="0 0 20 12"><ellipse cx="10" cy="6" rx="9.600" ry="5.400" fill="#39439a"/><text x="10" y="8.400" font-size="7" font-weight="bold" font-style="italic" text-anchor="middle" fill="#fff" font-family="Liberation Sans, sans-serif">php</text></svg>
<div class="a t " style="left:290.00px;top:851.00px;height:19.88px;line-height:19.88px;font-size:13.25px;color:#333;">env.php</div>
<div class="a " style="left:220.00px;top:915.36px;width:2303.50px;height:1.12px;background:#ebeef5;"></div>
<div class="a " style="left:230.50px;top:890.04px;width:16.00px;height:16.00px;background:#fff;border:1px solid #d4d7e0;box-sizing:border-box;border-radius:2.00px;"></div>
<svg class="a" style="left:261.25px;top:891.04px;width:22.00px;height:13.50px;" viewBox="0 0 20 12"><ellipse cx="10" cy="6" rx="9.600" ry="5.400" fill="#39439a"/><text x="10" y="8.400" font-size="7" font-weight="bold" font-style="italic" text-anchor="middle" fill="#fff" font-family="Liberation Sans, sans-serif">php</text></svg>
<div class="a t " style="left:290.00px;top:888.52px;height:19.88px;line-height:19.88px;font-size:13.25px;color:#333;">phpstan-bootstrap.php</div>
<div class="a " style="left:220.00px;top:952.00px;width:2303.50px;height:1.12px;background:#ebeef5;"></div>
<div class="a " style="left:230.50px;top:926.68px;width:16.00px;height:16.00px;background:#fff;border:1px solid #d4d7e0;box-sizing:border-box;border-radius:2.00px;"></div>
<svg class="a" style="left:264.75px;top:924.18px;width:16.50px;height:21.00px;" viewBox="0 0 15 20"><path d="M1 1h8.500L14 5.500V19H1z" fill="#f4f4f4" stroke="#cfcfcf" stroke-width=".8"/><path d="M9.500 1v4.500H14" fill="#e4e4e4" stroke="#cfcfcf" stroke-width=".8"/><path d="M3.500 8h8M3.500 10.500h8M3.500 13h8M3.500 15.500h6" stroke="#d9d9d9" stroke-width=".9"/></svg>
<div class="a t " style="left:290.00px;top:926.01px;height:19.88px;line-height:19.88px;font-size:13.25px;color:#333;">phpstan.neon</div>
<div class="a " style="left:220.00px;top:988.64px;width:2303.50px;height:1.12px;background:#ebeef5;"></div>
<div class="a " style="left:230.50px;top:963.32px;width:16.00px;height:16.00px;background:#fff;border:1px solid #d4d7e0;box-sizing:border-box;border-radius:2.00px;"></div>
<svg class="a" style="left:261.25px;top:964.32px;width:22.00px;height:13.50px;" viewBox="0 0 20 12"><ellipse cx="10" cy="6" rx="9.600" ry="5.400" fill="#39439a"/><text x="10" y="8.400" font-size="7" font-weight="bold" font-style="italic" text-anchor="middle" fill="#fff" font-family="Liberation Sans, sans-serif">php</text></svg>
<div class="a t " style="left:290.00px;top:961.01px;height:19.88px;line-height:19.88px;font-size:13.25px;color:#333;">rector.php</div>
<div class="a " style="left:220.00px;top:1025.28px;width:2303.50px;height:1.12px;background:#ebeef5;"></div>
<div class="a " style="left:230.50px;top:999.96px;width:16.00px;height:16.00px;background:#fff;border:1px solid #d4d7e0;box-sizing:border-box;border-radius:2.00px;"></div>
<svg class="a" style="left:261.25px;top:1000.96px;width:22.00px;height:13.50px;" viewBox="0 0 20 12"><ellipse cx="10" cy="6" rx="9.600" ry="5.400" fill="#39439a"/><text x="10" y="8.400" font-size="7" font-weight="bold" font-style="italic" text-anchor="middle" fill="#fff" font-family="Liberation Sans, sans-serif">php</text></svg>
<div class="a t " style="left:290.00px;top:998.51px;height:19.88px;line-height:19.88px;font-size:13.25px;color:#333;">upgrading.php</div>
<div class="a t " style="left:232.00px;top:1212.00px;height:18.56px;line-height:18.56px;font-size:12.38px;color:#606266;letter-spacing:0.084px;">共11个目录，11个文件，文件大小</div>
<div class="a t " style="left:429.25px;top:1212.00px;height:18.56px;line-height:18.56px;font-size:12.38px;color:#20a53a;">计算</div>
<div class="a " style="left:2129.50px;top:1208.50px;width:23.75px;height:24.75px;background:#f4f4f5;border-radius:2.00px;"></div>
<svg class="a" style="left:2138.00px;top:1216.00px;width:7.00px;height:10.00px;" viewBox="0 0 7 10"><path d="M5 1.500L1.800 5 5 8.500" fill="none" stroke="#c0c4cc" stroke-width="1.200"/></svg>
<div class="a " style="left:2162.50px;top:1208.50px;width:23.75px;height:24.75px;background:#bfe5c7;border-radius:2.00px;"></div>
<div class="a t " style="left:2174.38px;transform:translateX(-50%);top:1212.02px;height:18.38px;line-height:18.38px;font-size:12.25px;color:#20a53a;font-weight:bold;">1</div>
<div class="a " style="left:2195.00px;top:1208.50px;width:23.75px;height:24.75px;background:#f4f4f5;border-radius:2.00px;"></div>
<svg class="a" style="left:2203.50px;top:1216.00px;width:7.00px;height:10.00px;" viewBox="0 0 7 10"><path d="M2 1.500L5.200 5 2 8.500" fill="none" stroke="#c0c4cc" stroke-width="1.200"/></svg>
<div class="a " style="left:2239.00px;top:1207.00px;width:101.00px;height:28.00px;background:#fff;border:1px solid #dcdfe6;box-sizing:border-box;border-radius:4.00px;"></div>
<div class="a t " style="left:2247.50px;top:1212.00px;height:18.56px;line-height:18.56px;font-size:12.38px;color:#909399;letter-spacing:0.609px;">500条/页</div>
<svg class="a" style="left:2321.50px;top:1218.00px;width:10.00px;height:7.00px;" viewBox="0 0 10 7"><path d="M1.500 1.500L5 5l3.500-3.500" fill="none" stroke="#c0c4cc" stroke-width="1.200"/></svg>
<div class="a t " style="left:2356.50px;top:1212.00px;height:18.56px;line-height:18.56px;font-size:12.38px;color:#606266;letter-spacing:0.266px;">共 22 条</div>
<div class="a t " style="left:2411.25px;top:1212.00px;height:18.56px;line-height:18.56px;font-size:12.38px;color:#606266;">前往</div>
<div class="a " style="left:2444.00px;top:1207.00px;width:46.50px;height:28.00px;background:#fff;border:1px solid #dcdfe6;box-sizing:border-box;border-radius:4.00px;"></div>
<div class="a t " style="left:2467.25px;transform:translateX(-50%);top:1212.00px;height:18.00px;line-height:18.00px;font-size:12.00px;color:#606266;">1</div>
<div class="a t " style="left:2498.75px;top:1212.00px;height:18.56px;line-height:18.56px;font-size:12.38px;color:#606266;">页</div>
<div class="a " style="left:2524.00px;top:1107.75px;width:37.50px;height:152.50px;background:#fff;border-radius:6.25px;box-shadow:0 0 6.25px rgba(0,0,0,.08);"></div>
<svg class="a" style="left:2535.00px;top:1124.50px;width:15.00px;height:13.00px;" viewBox="0 0 14 12"><path d="M2 7V6a5 5 0 0 1 10 0v1" fill="none" stroke="#20a53a" stroke-width="1.600"/><path d="M3 5.500a4 4 0 0 1 8 0V9a3 3 0 0 1-3 2.500H6A3 3 0 0 1 3 9z" fill="#20a53a"/></svg>
<div class="a t " style="left:2542.50px;transform:translateX(-50%);top:1139.50px;height:18.75px;line-height:18.75px;font-size:12.50px;color:#20a53a;">客</div>
<div class="a t " style="left:2542.50px;transform:translateX(-50%);top:1154.52px;height:18.75px;line-height:18.75px;font-size:12.50px;color:#20a53a;">服</div>
<svg class="a" style="left:2535.50px;top:1200.00px;width:14.00px;height:14.00px;" viewBox="0 0 13 13"><path d="M6 2H2.500C1.700 2 1 2.700 1 3.500v7c0 .8.700 1.500 1.500 1.500h7c.8 0 1.500-.7 1.500-1.500V7M5 8.500l.5-2.300L10.800 1l1.600 1.600-5.200 5.300z" fill="none" stroke="#20a53a" stroke-width="1.200"/></svg>
<div class="a t " style="left:2542.50px;transform:translateX(-50%);top:1219.52px;height:18.75px;line-height:18.75px;font-size:12.50px;color:#20a53a;">评</div>
<div class="a t " style="left:2542.50px;transform:translateX(-50%);top:1232.00px;height:18.75px;line-height:18.75px;font-size:12.50px;color:#20a53a;">价</div>
<div class="a t " style="left:968.75px;top:1292.00px;height:18.19px;line-height:18.19px;font-size:12.12px;color:#999;letter-spacing:0.411px;">宝塔Linux面板©2014-2025 广东堡塔安全技术有限公司 (bt.cn)</div>
<svg class="a" style="left:1342.75px;top:1295.25px;width:12.00px;height:12.00px;" viewBox="0 0 10 10"><circle cx="5" cy="5" r="4" fill="none" stroke="#8c8c8c" stroke-width="1.100"/><path d="M5 2.600v3.200M5 7v.8" stroke="#8c8c8c" stroke-width="1.100"/></svg>
<div class="a " style="left:1333.25px;top:1295.00px;width:1.12px;height:12.50px;background:#dadada;"></div>
<div class="a t " style="left:1358.50px;top:1292.00px;height:18.19px;line-height:18.19px;font-size:12.12px;color:#999;">论坛求助</div>
<svg class="a" style="left:1423.75px;top:1295.25px;width:12.00px;height:12.00px;" viewBox="0 0 10 10"><circle cx="5" cy="5" r="4" fill="none" stroke="#8c8c8c" stroke-width="1.100"/><path d="M5 2.600v3.200M5 7v.8" stroke="#8c8c8c" stroke-width="1.100"/></svg>
<div class="a " style="left:1414.25px;top:1295.00px;width:1.12px;height:12.50px;background:#dadada;"></div>
<div class="a t " style="left:1439.50px;top:1292.00px;height:18.19px;line-height:18.19px;font-size:12.12px;color:#999;">使用手册</div>
<svg class="a" style="left:1506.75px;top:1295.25px;width:12.00px;height:12.00px;" viewBox="0 0 10 10"><circle cx="5" cy="5" r="4" fill="none" stroke="#8c8c8c" stroke-width="1.100"/><path d="M5 2.600v3.200M5 7v.8" stroke="#8c8c8c" stroke-width="1.100"/></svg>
<div class="a " style="left:1497.25px;top:1295.00px;width:1.12px;height:12.50px;background:#dadada;"></div>
<div class="a t " style="left:1522.50px;top:1292.00px;height:18.19px;line-height:18.19px;font-size:12.12px;color:#999;">微信公众号</div>
<svg class="a" style="left:1601.50px;top:1295.25px;width:12.00px;height:12.00px;" viewBox="0 0 10 10"><circle cx="5" cy="5" r="4" fill="none" stroke="#8c8c8c" stroke-width="1.100"/><path d="M5 2.600v3.200M5 7v.8" stroke="#8c8c8c" stroke-width="1.100"/></svg>
<div class="a " style="left:1592.00px;top:1295.00px;width:1.12px;height:12.50px;background:#dadada;"></div>
<div class="a t " style="left:1617.25px;top:1292.00px;height:18.19px;line-height:18.19px;font-size:12.12px;color:#999;">正版查询</div>
<svg class="a" style="left:1684.25px;top:1295.25px;width:12.00px;height:12.00px;" viewBox="0 0 10 10"><circle cx="5" cy="5" r="4" fill="none" stroke="#8c8c8c" stroke-width="1.100"/><path d="M5 2.600v3.200M5 7v.8" stroke="#8c8c8c" stroke-width="1.100"/></svg>
<div class="a " style="left:1674.75px;top:1295.00px;width:1.12px;height:12.50px;background:#dadada;"></div>
<div class="a t " style="left:1700.00px;top:1292.00px;height:18.19px;line-height:18.19px;font-size:12.12px;color:#999;">联系人工客服</div>
<div class="a " style="left:584.75px;top:110.75px;width:1456.00px;height:1166.50px;background:#f8f8f8;box-shadow:0 3.00px 12.50px rgba(0,0,0,.16);"></div>
<div class="a t " style="left:604.50px;top:127.50px;height:21.56px;line-height:21.56px;font-size:14.38px;color:#333;">在线文本编辑器</div>
<div class="a " style="left:1920.00px;top:135.75px;width:17.75px;height:3.25px;background:#777;"></div>
<svg class="a" style="left:1965.00px;top:128.25px;width:18.50px;height:18.50px;" viewBox="0 0 16 16"><rect x="1" y="1" width="14" height="14" rx="1.800" fill="none" stroke="#8a8a90" stroke-width="1.300"/><path d="M4.200 8v6.800M1 8h6.500M8 8.200l4.300-4.300" fill="none" stroke="#9a9aa0" stroke-width="1.100"/><path d="M9.200 3.200h4v4z" fill="#3a3f4a"/></svg>
<svg class="a" style="left:2010.50px;top:129.25px;width:16.50px;height:16.50px;" viewBox="0 0 12 12"><path d="M1 1l10 10M11 1L1 11" stroke="#454a55" stroke-width="1.600"/></svg>
<div class="a " style="left:584.75px;top:162.50px;width:1456.00px;height:1114.75px;background:#2a2a26;"></div>
<div class="a " style="left:584.75px;top:160.50px;width:1456.00px;height:31.50px;background:#565656;"></div>
<div class="a " style="left:662.50px;top:160.50px;width:1.12px;height:31.00px;background:#474747;"></div>
<svg class="a" style="left:599.88px;top:171.00px;width:12.50px;height:12.50px;" viewBox="0 0 12 12"><path d="M1 6.500l3.300 3.300L11 2.300" fill="none" stroke="#fff" stroke-width="2.300"/></svg>
<div class="a t " style="left:619.12px;top:167.52px;height:21.94px;line-height:21.94px;font-size:14.62px;color:#fff;">保存</div>
<div class="a " style="left:770.50px;top:160.50px;width:1.12px;height:31.00px;background:#474747;"></div>
<svg class="a" style="left:678.37px;top:171.00px;width:12.50px;height:12.50px;" viewBox="0 0 12 12"><rect x="1.500" y="3.200" width="6.800" height="8" fill="none" stroke="#fff" stroke-width="1.600"/><path d="M4 1.200h6.800V9" fill="none" stroke="#fff" stroke-width="1.600"/></svg>
<div class="a t " style="left:697.62px;top:167.52px;height:21.94px;line-height:21.94px;font-size:14.62px;color:#fff;">全部保存</div>
<div class="a " style="left:849.25px;top:160.50px;width:1.12px;height:31.00px;background:#474747;"></div>
<svg class="a" style="left:786.37px;top:171.00px;width:12.50px;height:12.50px;" viewBox="0 0 12 12"><path d="M10.300 6A4.300 4.300 0 1 1 8.700 2.700" fill="none" stroke="#fff" stroke-width="1.700"/><path d="M7 .2l3.400 2.500-3.500 1.900z" fill="#fff"/></svg>
<div class="a t " style="left:805.62px;top:167.52px;height:21.94px;line-height:21.94px;font-size:14.62px;color:#fff;">刷新</div>
<div class="a " style="left:929.50px;top:160.50px;width:1.12px;height:31.00px;background:#474747;"></div>
<svg class="a" style="left:865.87px;top:171.00px;width:12.50px;height:12.50px;" viewBox="0 0 12 12"><circle cx="5.500" cy="5.500" r="4.200" fill="none" stroke="#fff" stroke-width="1.700"/><path d="M8.500 8.500l2.800 2.800" stroke="#fff" stroke-width="1.700"/></svg>
<div class="a t " style="left:885.12px;top:167.52px;height:21.94px;line-height:21.94px;font-size:14.62px;color:#fff;">搜索</div>
<div class="a " style="left:1008.25px;top:160.50px;width:1.12px;height:31.00px;background:#474747;"></div>
<svg class="a" style="left:945.38px;top:171.00px;width:12.50px;height:12.50px;" viewBox="0 0 12 12"><path d="M1.500 1v10M4.300 2h7M4.300 5h7M4.300 8h7M4.300 10.800h7" fill="none" stroke="#e8e8e8" stroke-width="1.500"/></svg>
<div class="a t " style="left:964.62px;top:167.52px;height:21.94px;line-height:21.94px;font-size:14.62px;color:#fff;">替换</div>
<div class="a " style="left:1102.50px;top:160.50px;width:1.12px;height:31.00px;background:#474747;"></div>
<svg class="a" style="left:1024.56px;top:171.00px;width:12.50px;height:12.50px;" viewBox="0 0 12 12"><path d="M6 .8v6.200M3.200 4.500L6 7.300l2.800-2.800" fill="none" stroke="#fff" stroke-width="1.700"/><path d="M1.500 7.500v3.300h9V7.500" fill="none" stroke="#fff" stroke-width="1.700"/></svg>
<div class="a t " style="left:1043.81px;top:167.52px;height:21.94px;line-height:21.94px;font-size:14.62px;color:#fff;">跳转行</div>
<div class="a " style="left:1209.50px;top:160.50px;width:1.12px;height:31.00px;background:#474747;"></div>
<svg class="a" style="left:1117.88px;top:171.00px;width:12.50px;height:12.50px;" viewBox="0 0 12 12"><rect x="1" y="1.500" width="10" height="9" fill="none" stroke="#fff" stroke-width="1.600"/><path d="M1 4.500h10" stroke="#fff" stroke-width="1.800"/></svg>
<div class="a t " style="left:1137.12px;top:167.52px;height:21.94px;line-height:21.94px;font-size:14.62px;color:#fff;">字体大小</div>
<div class="a " style="left:1287.50px;top:160.50px;width:1.12px;height:31.00px;background:#474747;"></div>
<svg class="a" style="left:1225.00px;top:171.00px;width:12.50px;height:12.50px;" viewBox="0 0 12 12"><path d="M1 2.800h10M1 6h10M1 9.200h10" stroke="#ddd" stroke-width="1.900"/></svg>
<div class="a t " style="left:1244.25px;top:167.52px;height:21.94px;line-height:21.94px;font-size:14.62px;color:#fff;">主题</div>
<div class="a " style="left:1368.75px;top:160.50px;width:1.12px;height:31.00px;background:#474747;"></div>
<svg class="a" style="left:1304.63px;top:171.00px;width:12.50px;height:12.50px;" viewBox="0 0 12 12"><circle cx="6" cy="6" r="4" fill="none" stroke="#fff" stroke-width="2.600"/><circle cx="6" cy="6" r="1.100" fill="#fff"/></svg>
<div class="a t " style="left:1323.88px;top:167.52px;height:21.94px;line-height:21.94px;font-size:14.62px;color:#fff;">设置</div>
<div class="a " style="left:1462.75px;top:160.50px;width:1.12px;height:31.00px;background:#474747;"></div>
<svg class="a" style="left:1384.94px;top:171.00px;width:12.50px;height:12.50px;" viewBox="0 0 12 12"><circle cx="6" cy="6" r="5.600" fill="#fff"/><path d="M6 2.800v3.700M6 8v1.200" stroke="#565656" stroke-width="1.600"/></svg>
<div class="a t " style="left:1404.19px;top:167.52px;height:21.94px;line-height:21.94px;font-size:14.62px;color:#fff;">快捷键</div>
<div class="a " style="left:584.75px;top:191.50px;width:264.00px;height:1085.75px;background:#222;"></div>
<div class="a " style="left:584.75px;top:191.50px;width:264.00px;height:40.00px;background:#333;"></div>
<div class="a t " style="left:599.75px;top:202.50px;height:21.75px;line-height:21.75px;font-size:14.50px;color:#f0f0f0;letter-spacing:0.630px;">目录：/www/wwwroot/tc.dd88.t...</div>
<div class="a " style="left:584.75px;top:231.50px;width:264.00px;height:31.25px;background:#565656;"></div>
<svg class="a" style="left:594.50px;top:240.75px;width:8.00px;height:12.50px;" viewBox="0 0 7 11"><path d="M3.500 10.800V1.500M.8 4.300l2.700-3L6.200 4.300" fill="none" stroke="#8fd19e" stroke-width="1.600"/></svg>
<div class="a t " style="left:610.00px;top:239.50px;height:18.56px;line-height:18.56px;font-size:12.38px;color:#f0f0f0;">上一级</div>
<svg class="a" style="left:670.00px;top:241.00px;width:11.50px;height:11.50px;" viewBox="0 0 12 12"><path d="M10.300 6A4.300 4.300 0 1 1 8.700 2.700" fill="none" stroke="#e4e4e4" stroke-width="1.700"/><path d="M7 .2l3.400 2.500-3.500 1.900z" fill="#e4e4e4"/></svg>
<div class="a t " style="left:687.00px;top:239.50px;height:18.56px;line-height:18.56px;font-size:12.38px;color:#f0f0f0;">刷新</div>
<svg class="a" style="left:735.75px;top:241.75px;width:9.50px;height:9.50px;" viewBox="0 0 9 9"><path d="M4.500 .6v7.800M.6 4.500h7.800" stroke="#ddd" stroke-width="1.700"/></svg>
<div class="a t " style="left:752.50px;top:239.50px;height:18.56px;line-height:18.56px;font-size:12.38px;color:#f0f0f0;">新建</div>
<svg class="a" style="left:800.00px;top:241.75px;width:9.50px;height:9.50px;" viewBox="0 0 9 9"><rect x="1" y="1" width="7" height="7" rx="1" fill="none" stroke="#e4e4e4" stroke-width="1.600"/></svg>
<div class="a t " style="left:817.00px;top:239.50px;height:18.56px;line-height:18.56px;font-size:12.38px;color:#f0f0f0;">搜索</div>
<svg class="a" style="left:599.00px;top:277.50px;width:5.75px;height:8.00px;" viewBox="0 0 5 8"><path d="M.6 .6L4.600 4 .6 7.400z" fill="#ddd"/></svg>
<svg class="a" style="left:612.50px;top:274.75px;width:16.00px;height:13.50px;" viewBox="0 0 15 12"><path d="M.5 2c0-.6.4-1 1-1h4l1.300 1.500h6.700c.6 0 1 .4 1 1v7.500c0 .6-.4 1-1 1h-12c-.6 0-1-.4-1-1z" fill="#e8b730"/></svg>
<div class="a t " style="left:634.75px;top:268.01px;height:23.25px;line-height:23.25px;font-size:15.50px;color:#f0f0f0;">.cache</div>
<svg class="a" style="left:599.00px;top:304.00px;width:5.75px;height:8.00px;" viewBox="0 0 5 8"><path d="M.6 .6L4.600 4 .6 7.400z" fill="#ddd"/></svg>
<svg class="a" style="left:612.50px;top:301.25px;width:16.00px;height:13.50px;" viewBox="0 0 15 12"><path d="M.5 2c0-.6.4-1 1-1h4l1.300 1.500h6.700c.6 0 1 .4 1 1v7.500c0 .6-.4 1-1 1h-12c-.6 0-1-.4-1-1z" fill="#e8b730"/></svg>
<div class="a t " style="left:634.75px;top:295.51px;height:23.25px;line-height:23.25px;font-size:15.50px;color:#f0f0f0;">.psysh</div>
<svg class="a" style="left:599.00px;top:330.50px;width:5.75px;height:8.00px;" viewBox="0 0 5 8"><path d="M.6 .6L4.600 4 .6 7.400z" fill="#ddd"/></svg>
<svg class="a" style="left:612.50px;top:327.75px;width:16.00px;height:13.50px;" viewBox="0 0 15 12"><path d="M.5 2c0-.6.4-1 1-1h4l1.300 1.500h6.700c.6 0 1 .4 1 1v7.500c0 .6-.4 1-1 1h-12c-.6 0-1-.4-1-1z" fill="#e8b730"/></svg>
<div class="a t " style="left:634.75px;top:323.01px;height:23.25px;line-height:23.25px;font-size:15.50px;color:#f0f0f0;">apache</div>
<svg class="a" style="left:599.00px;top:357.00px;width:5.75px;height:8.00px;" viewBox="0 0 5 8"><path d="M.6 .6L4.600 4 .6 7.400z" fill="#ddd"/></svg>
<svg class="a" style="left:612.50px;top:354.25px;width:16.00px;height:13.50px;" viewBox="0 0 15 12"><path d="M.5 2c0-.6.4-1 1-1h4l1.300 1.500h6.700c.6 0 1 .4 1 1v7.500c0 .6-.4 1-1 1h-12c-.6 0-1-.4-1-1z" fill="#e8b730"/></svg>
<div class="a t " style="left:634.75px;top:348.01px;height:23.25px;line-height:23.25px;font-size:15.50px;color:#f0f0f0;">bin</div>
<svg class="a" style="left:599.00px;top:383.50px;width:5.75px;height:8.00px;" viewBox="0 0 5 8"><path d="M.6 .6L4.600 4 .6 7.400z" fill="#ddd"/></svg>
<svg class="a" style="left:612.50px;top:380.75px;width:16.00px;height:13.50px;" viewBox="0 0 15 12"><path d="M.5 2c0-.6.4-1 1-1h4l1.300 1.500h6.700c.6 0 1 .4 1 1v7.500c0 .6-.4 1-1 1h-12c-.6 0-1-.4-1-1z" fill="#e8b730"/></svg>
<div class="a t " style="left:634.75px;top:375.51px;height:23.25px;line-height:23.25px;font-size:15.50px;color:#f0f0f0;">content</div>
<svg class="a" style="left:599.00px;top:410.00px;width:5.75px;height:8.00px;" viewBox="0 0 5 8"><path d="M.6 .6L4.600 4 .6 7.400z" fill="#ddd"/></svg>
<svg class="a" style="left:612.50px;top:407.25px;width:16.00px;height:13.50px;" viewBox="0 0 15 12"><path d="M.5 2c0-.6.4-1 1-1h4l1.300 1.500h6.700c.6 0 1 .4 1 1v7.500c0 .6-.4 1-1 1h-12c-.6 0-1-.4-1-1z" fill="#e8b730"/></svg>
<div class="a t " style="left:634.75px;top:403.01px;height:23.25px;line-height:23.25px;font-size:15.50px;color:#f0f0f0;">languages</div>
<svg class="a" style="left:599.00px;top:436.50px;width:5.75px;height:8.00px;" viewBox="0 0 5 8"><path d="M.6 .6L4.600 4 .6 7.400z" fill="#ddd"/></svg>
<svg class="a" style="left:612.50px;top:433.75px;width:16.00px;height:13.50px;" viewBox="0 0 15 12"><path d="M.5 2c0-.6.4-1 1-1h4l1.300 1.500h6.700c.6 0 1 .4 1 1v7.500c0 .6-.4 1-1 1h-12c-.6 0-1-.4-1-1z" fill="#e8b730"/></svg>
<div class="a t " style="left:634.75px;top:428.01px;height:23.25px;line-height:23.25px;font-size:15.50px;color:#f0f0f0;">legacy</div>
<svg class="a" style="left:599.00px;top:463.00px;width:5.75px;height:8.00px;" viewBox="0 0 5 8"><path d="M.6 .6L4.600 4 .6 7.400z" fill="#ddd"/></svg>
<svg class="a" style="left:612.50px;top:460.25px;width:16.00px;height:13.50px;" viewBox="0 0 15 12"><path d="M.5 2c0-.6.4-1 1-1h4l1.300 1.500h6.700c.6 0 1 .4 1 1v7.500c0 .6-.4 1-1 1h-12c-.6 0-1-.4-1-1z" fill="#e8b730"/></svg>
<div class="a t " style="left:634.75px;top:455.51px;height:23.25px;line-height:23.25px;font-size:15.50px;color:#f0f0f0;">routes</div>
<svg class="a" style="left:599.00px;top:489.50px;width:5.75px;height:8.00px;" viewBox="0 0 5 8"><path d="M.6 .6L4.600 4 .6 7.400z" fill="#ddd"/></svg>
<svg class="a" style="left:612.50px;top:486.75px;width:16.00px;height:13.50px;" viewBox="0 0 15 12"><path d="M.5 2c0-.6.4-1 1-1h4l1.300 1.500h6.700c.6 0 1 .4 1 1v7.500c0 .6-.4 1-1 1h-12c-.6 0-1-.4-1-1z" fill="#e8b730"/></svg>
<div class="a t " style="left:634.75px;top:480.51px;height:23.25px;line-height:23.25px;font-size:15.50px;color:#f0f0f0;">schemas</div>
<svg class="a" style="left:599.00px;top:516.00px;width:5.75px;height:8.00px;" viewBox="0 0 5 8"><path d="M.6 .6L4.600 4 .6 7.400z" fill="#ddd"/></svg>
<svg class="a" style="left:612.50px;top:513.25px;width:16.00px;height:13.50px;" viewBox="0 0 15 12"><path d="M.5 2c0-.6.4-1 1-1h4l1.300 1.500h6.700c.6 0 1 .4 1 1v7.500c0 .6-.4 1-1 1h-12c-.6 0-1-.4-1-1z" fill="#e8b730"/></svg>
<div class="a t " style="left:634.75px;top:508.01px;height:23.25px;line-height:23.25px;font-size:15.50px;color:#f0f0f0;">src</div>
<svg class="a" style="left:599.00px;top:542.50px;width:5.75px;height:8.00px;" viewBox="0 0 5 8"><path d="M.6 .6L4.600 4 .6 7.400z" fill="#ddd"/></svg>
<svg class="a" style="left:612.50px;top:539.75px;width:16.00px;height:13.50px;" viewBox="0 0 15 12"><path d="M.5 2c0-.6.4-1 1-1h4l1.300 1.500h6.700c.6 0 1 .4 1 1v7.500c0 .6-.4 1-1 1h-12c-.6 0-1-.4-1-1z" fill="#e8b730"/></svg>
<div class="a t " style="left:634.75px;top:533.01px;height:23.25px;line-height:23.25px;font-size:15.50px;color:#f0f0f0;">vendor</div>
<svg class="a" style="left:612.50px;top:564.75px;width:14.25px;height:16.50px;" viewBox="0 0 12 14"><path d="M1.200 1h6.300l3.300 3.200V13H1.200z" fill="#4a4450" stroke="#a596ae" stroke-width="1.700"/><path d="M7 1v4h3.800" fill="none" stroke="#a596ae" stroke-width="1.300"/><path d="M4.600 5v6" stroke="#c9bdd0" stroke-width="1.300"/></svg>
<div class="a t " style="left:634.75px;top:560.51px;height:23.25px;line-height:23.25px;font-size:15.50px;color:#f0f0f0;">.htaccess</div>
<svg class="a" style="left:612.50px;top:592.25px;width:15.50px;height:11.25px;" viewBox="0 0 15 10.500"><path d="M1 4.500C1 1.800 3.500.5 7.500.5S14 1.800 14 4.500c0 1.800-.8 3-2 3.600V10.200h-2.400V8.400H8.700v1.800H6.300V8.400H5.400v1.800H3V8.100C1.800 7.500 1 6.300 1 4.500z" fill="#4f93b0"/></svg>
<div class="a t " style="left:634.75px;top:588.01px;height:23.25px;line-height:23.25px;font-size:15.50px;color:#f0f0f0;">.psysh.php</div>
<svg class="a" style="left:612.50px;top:617.25px;width:17.00px;height:17.00px;" viewBox="0 0 13 13"><circle cx="6.500" cy="6.500" r="6.200" fill="#6fc7b6"/><ellipse cx="6.500" cy="6.500" rx="2" ry="3.100" fill="#222"/></svg>
<div class="a t " style="left:634.75px;top:613.01px;height:23.25px;line-height:23.25px;font-size:15.50px;color:#f0f0f0;">composer.json</div>
<svg class="a" style="left:612.50px;top:644.25px;width:14.25px;height:16.50px;" viewBox="0 0 12 14"><path d="M1.200 1h6.300l3.300 3.200V13H1.200z" fill="#4a4450" stroke="#a596ae" stroke-width="1.700"/><path d="M7 1v4h3.800" fill="none" stroke="#a596ae" stroke-width="1.300"/><path d="M4.600 5v6" stroke="#c9bdd0" stroke-width="1.300"/></svg>
<div class="a t " style="left:634.75px;top:640.51px;height:23.25px;line-height:23.25px;font-size:15.50px;color:#f0f0f0;">composer.lock</div>
<svg class="a" style="left:612.50px;top:671.75px;width:15.50px;height:11.25px;" viewBox="0 0 15 10.500"><path d="M1 4.500C1 1.800 3.500.5 7.500.5S14 1.800 14 4.500c0 1.800-.8 3-2 3.600V10.200h-2.400V8.400H8.700v1.800H6.300V8.400H5.400v1.800H3V8.100C1.800 7.500 1 6.300 1 4.500z" fill="#4f93b0"/></svg>
<div class="a t " style="left:634.75px;top:668.01px;height:23.25px;line-height:23.25px;font-size:15.50px;color:#f0f0f0;">configurator.php</div>
<svg class="a" style="left:612.50px;top:698.25px;width:15.50px;height:11.25px;" viewBox="0 0 15 10.500"><path d="M1 4.500C1 1.800 3.500.5 7.500.5S14 1.800 14 4.500c0 1.800-.8 3-2 3.600V10.200h-2.400V8.400H8.700v1.800H6.300V8.400H5.400v1.800H3V8.100C1.800 7.500 1 6.300 1 4.500z" fill="#4f93b0"/></svg>
<div class="a t " style="left:634.75px;top:693.01px;height:23.25px;line-height:23.25px;font-size:15.50px;color:#f0f0f0;">env-default.php</div>
<svg class="a" style="left:612.50px;top:724.75px;width:15.50px;height:11.25px;" viewBox="0 0 15 10.500"><path d="M1 4.500C1 1.800 3.500.5 7.500.5S14 1.800 14 4.500c0 1.800-.8 3-2 3.600V10.200h-2.400V8.400H8.700v1.800H6.300V8.400H5.400v1.800H3V8.100C1.800 7.500 1 6.300 1 4.500z" fill="#4f93b0"/></svg>
<div class="a t " style="left:634.75px;top:720.51px;height:23.25px;line-height:23.25px;font-size:15.50px;color:#e6b422;">env.php</div>
<svg class="a" style="left:612.50px;top:751.25px;width:15.50px;height:11.25px;" viewBox="0 0 15 10.500"><path d="M1 4.500C1 1.800 3.500.5 7.500.5S14 1.800 14 4.500c0 1.800-.8 3-2 3.600V10.200h-2.400V8.400H8.700v1.800H6.300V8.400H5.400v1.800H3V8.100C1.800 7.500 1 6.300 1 4.500z" fill="#4f93b0"/></svg>
<div class="a t " style="left:634.75px;top:745.51px;height:23.25px;line-height:23.25px;font-size:15.50px;color:#f0f0f0;">phpstan-bootstrap.php</div>
<svg class="a" style="left:612.50px;top:776.75px;width:14.25px;height:16.50px;" viewBox="0 0 12 14"><path d="M1.200 1h6.300l3.300 3.200V13H1.200z" fill="#4a4450" stroke="#a596ae" stroke-width="1.700"/><path d="M7 1v4h3.800" fill="none" stroke="#a596ae" stroke-width="1.300"/><path d="M4.600 5v6" stroke="#c9bdd0" stroke-width="1.300"/></svg>
<div class="a t " style="left:634.75px;top:773.01px;height:23.25px;line-height:23.25px;font-size:15.50px;color:#f0f0f0;">phpstan.neon</div>
<svg class="a" style="left:612.50px;top:804.25px;width:15.50px;height:11.25px;" viewBox="0 0 15 10.500"><path d="M1 4.500C1 1.800 3.500.5 7.500.5S14 1.800 14 4.500c0 1.800-.8 3-2 3.600V10.200h-2.400V8.400H8.700v1.800H6.300V8.400H5.400v1.800H3V8.100C1.800 7.500 1 6.300 1 4.500z" fill="#4f93b0"/></svg>
<div class="a t " style="left:634.75px;top:798.01px;height:23.25px;line-height:23.25px;font-size:15.50px;color:#f0f0f0;">rector.php</div>
<svg class="a" style="left:612.50px;top:830.75px;width:15.50px;height:11.25px;" viewBox="0 0 15 10.500"><path d="M1 4.500C1 1.800 3.500.5 7.500.5S14 1.800 14 4.500c0 1.800-.8 3-2 3.600V10.200h-2.400V8.400H8.700v1.800H6.300V8.400H5.400v1.800H3V8.100C1.800 7.500 1 6.300 1 4.500z" fill="#4f93b0"/></svg>
<div class="a t " style="left:634.75px;top:825.51px;height:23.25px;line-height:23.25px;font-size:15.50px;color:#f0f0f0;">upgrading.php</div>
<div class="a " style="left:848.75px;top:191.50px;width:1192.00px;height:44.25px;background:#060606;"></div>
<div class="a " style="left:848.75px;top:191.50px;width:135.00px;height:44.25px;background:#2b2b2b;"></div>
<div class="a " style="left:848.75px;top:232.75px;width:135.75px;height:2.50px;background:#20a53a;"></div>
<svg class="a" style="left:859.00px;top:209.00px;width:13.50px;height:9.50px;" viewBox="0 0 15 10.500"><path d="M1 4.500C1 1.800 3.500.5 7.500.5S14 1.800 14 4.500c0 1.800-.8 3-2 3.600V10.200h-2.400V8.400H8.700v1.800H6.300V8.400H5.400v1.800H3V8.100C1.800 7.500 1 6.300 1 4.500z" fill="#4f93b0"/></svg>
<div class="a t " style="left:883.00px;top:200.52px;height:23.25px;line-height:23.25px;font-size:15.50px;color:#a8a8a8;">env.php</div>
<svg class="a" style="left:960.50px;top:208.25px;width:11.00px;height:11.00px;" viewBox="0 0 10 10"><circle cx="5" cy="5" r="5" fill="#f27c1c"/><path d="M5 2.300v3.400M5 7v1" stroke="#fff" stroke-width="1.300"/></svg>
<div class="a " style="left:848.75px;top:234.25px;width:1192.00px;height:1010.75px;background:#272822;"></div>
<div class="a " style="left:848.75px;top:234.75px;width:51.50px;height:1010.25px;background:#2f3129;"></div>
<div class="a " style="left:848.75px;top:425.25px;width:51.50px;height:17.25px;background:#272727;"></div>
<div class="a " style="left:900.25px;top:425.25px;width:1140.50px;height:17.25px;background:#202020;"></div>
<div class="a t " style="right:1674.50px;top:236.00px;height:21.00px;line-height:21.00px;font-size:14.00px;color:#8f908a;font-family:'Liberation Mono',monospace;letter-spacing:-0.61px;">1</div>
<div class="a t code" style="left:903.25px;top:236.00px;height:21.00px;line-height:21.00px;font-size:14.00px;color:#f8f8f2;letter-spacing:-0.61px;"><u>&lt;?php</u><i>¬</i></div>
<div class="a t " style="right:1674.50px;top:253.50px;height:21.00px;line-height:21.00px;font-size:14.00px;color:#8f908a;font-family:'Liberation Mono',monospace;letter-spacing:-0.61px;">2</div>
<div class="a t code" style="left:903.25px;top:253.50px;height:21.00px;line-height:21.00px;font-size:14.00px;color:#f8f8f2;letter-spacing:-0.61px;"><i>¬</i></div>
<div class="a t " style="right:1674.50px;top:271.00px;height:21.00px;line-height:21.00px;font-size:14.00px;color:#8f908a;font-family:'Liberation Mono',monospace;letter-spacing:-0.61px;">3</div>
<div class="a t code" style="left:903.25px;top:271.00px;height:21.00px;line-height:21.00px;font-size:14.00px;color:#f8f8f2;letter-spacing:-0.61px;"><em>return</em><i>·</i>[<i>¬</i></div>
<div class="a t " style="right:1674.50px;top:288.50px;height:21.00px;line-height:21.00px;font-size:14.00px;color:#8f908a;font-family:'Liberation Mono',monospace;letter-spacing:-0.61px;">4</div>
<div class="a t code" style="left:903.25px;top:288.50px;height:21.00px;line-height:21.00px;font-size:14.00px;color:#f8f8f2;letter-spacing:-0.61px;"><i>····</i><s>'CHEVERETO_DB_HOST'</s><i>·</i><b>=&gt;</b><i>·</i><s>'localhost'</s>,<i>¬</i></div>
<div class="a t " style="right:1674.50px;top:306.00px;height:21.00px;line-height:21.00px;font-size:14.00px;color:#8f908a;font-family:'Liberation Mono',monospace;letter-spacing:-0.61px;">5</div>
<div class="a t code" style="left:903.25px;top:306.00px;height:21.00px;line-height:21.00px;font-size:14.00px;color:#f8f8f2;letter-spacing:-0.61px;"><i>····</i><s>'CHEVERETO_DB_NAME'</s><i>·</i><b>=&gt;</b><i>·</i><s>'tc_dd88_top'</s>,<i>¬</i></div>
<div class="a t " style="right:1674.50px;top:323.50px;height:21.00px;line-height:21.00px;font-size:14.00px;color:#8f908a;font-family:'Liberation Mono',monospace;letter-spacing:-0.61px;">6</div>
<div class="a t code" style="left:903.25px;top:323.50px;height:21.00px;line-height:21.00px;font-size:14.00px;color:#f8f8f2;letter-spacing:-0.61px;"><i>····</i><s>'CHEVERETO_DB_PASS'</s><i>·</i><b>=&gt;</b><i>·</i><s>'YrTP95pMK6AHXAbd'</s>,<i>¬</i></div>
<div class="a t " style="right:1674.50px;top:341.00px;height:21.00px;line-height:21.00px;font-size:14.00px;color:#8f908a;font-family:'Liberation Mono',monospace;letter-spacing:-0.61px;">7</div>
<div class="a t code" style="left:903.25px;top:341.00px;height:21.00px;line-height:21.00px;font-size:14.00px;color:#f8f8f2;letter-spacing:-0.61px;"><i>····</i><s>'CHEVERETO_DB_PORT'</s><i>·</i><b>=&gt;</b><i>·</i><s>'3306'</s>,<i>¬</i></div>
<div class="a t " style="right:1674.50px;top:356.00px;height:21.00px;line-height:21.00px;font-size:14.00px;color:#8f908a;font-family:'Liberation Mono',monospace;letter-spacing:-0.61px;">8</div>
<div class="a t code" style="left:903.25px;top:356.00px;height:21.00px;line-height:21.00px;font-size:14.00px;color:#f8f8f2;letter-spacing:-0.61px;"><i>····</i><s>'CHEVERETO_DB_USER'</s><i>·</i><b>=&gt;</b><i>·</i><s>'tc_dd88_top'</s>,<i>¬</i></div>
<div class="a t " style="right:1674.50px;top:373.50px;height:21.00px;line-height:21.00px;font-size:14.00px;color:#8f908a;font-family:'Liberation Mono',monospace;letter-spacing:-0.61px;">9</div>
<div class="a t code" style="left:903.25px;top:373.50px;height:21.00px;line-height:21.00px;font-size:14.00px;color:#f8f8f2;letter-spacing:-0.61px;"><i>····</i><s>'CHEVERETO_DB_TABLE_PREFIX'</s><i>·</i><b>=&gt;</b><i>·</i><s>''</s>,<i>¬</i></div>
<div class="a t " style="right:1674.50px;top:391.00px;height:21.00px;line-height:21.00px;font-size:14.00px;color:#8f908a;font-family:'Liberation Mono',monospace;letter-spacing:-0.61px;">10</div>
<div class="a t code" style="left:903.25px;top:391.00px;height:21.00px;line-height:21.00px;font-size:14.00px;color:#f8f8f2;letter-spacing:-0.61px;"><i>····</i><s>'CHEVERETO_ENCRYPTION_KEY'</s><i>·</i><b>=&gt;</b><i>·</i><s>'EuFPukYt3QGwT6wA662V0Dr3NV5PGosDP/YJ0JvN2yk='</s>,<i>¬</i></div>
<div class="a t " style="right:1674.50px;top:408.50px;height:21.00px;line-height:21.00px;font-size:14.00px;color:#8f908a;font-family:'Liberation Mono',monospace;letter-spacing:-0.61px;">11</div>
<div class="a t code" style="left:903.25px;top:408.50px;height:21.00px;line-height:21.00px;font-size:14.00px;color:#f8f8f2;letter-spacing:-0.61px;"><i>····</i><s>'CHEVERETO_BINARY_EXIFTOOL'</s><i>·</i><b>=&gt;</b><i>·</i><s>'/usr/bin/exiftool'</s>,<i>¬</i></div>
<div class="a t " style="right:1674.50px;top:426.00px;height:21.00px;line-height:21.00px;font-size:14.00px;color:#8f908a;font-family:'Liberation Mono',monospace;letter-spacing:-0.61px;">12</div>
<div class="a t code" style="left:903.25px;top:426.00px;height:21.00px;line-height:21.00px;font-size:14.00px;color:#f8f8f2;letter-spacing:-0.61px;"><i>····</i><s>'CHEVERETO_BINARY_EXIFTRAN'</s><i>·</i><b>=&gt;</b><i>·</i><s>'/usr/bin/exiftran'</s>,<i>¬</i></div>
<div class="a t " style="right:1674.50px;top:443.50px;height:21.00px;line-height:21.00px;font-size:14.00px;color:#8f908a;font-family:'Liberation Mono',monospace;letter-spacing:-0.61px;">13</div>
<div class="a t code" style="left:903.25px;top:443.50px;height:21.00px;line-height:21.00px;font-size:14.00px;color:#f8f8f2;letter-spacing:-0.61px;">];<i>¬</i></div>
<div class="a t " style="right:1674.50px;top:461.00px;height:21.00px;line-height:21.00px;font-size:14.00px;color:#8f908a;font-family:'Liberation Mono',monospace;letter-spacing:-0.61px;">14</div>
<div class="a t code" style="left:903.25px;top:461.00px;height:21.00px;line-height:21.00px;font-size:14.00px;color:#f8f8f2;letter-spacing:-0.61px;"><i>¶</i></div>
<svg class="a" style="left:889.50px;top:276.50px;width:5.00px;height:4.50px;" viewBox="0 0 6 5"><path d="M.5 .5h5L3 4.500z" fill="#8f908a"/></svg>
<div class="a " style="left:1332.25px;top:426.50px;width:1.25px;height:14.75px;background:#a8a8a0;"></div>
<div class="a " style="left:848.75px;top:1242.50px;width:1192.00px;height:34.75px;background:#565656;"></div>
<div class="a t " style="left:863.75px;top:1252.00px;height:18.56px;line-height:18.56px;font-size:12.38px;color:#fff;letter-spacing:1.884px;">文件位置：/www/wwwroot/tc.dd88.top/app/env.php</div>
<div class="a t " style="left:1455.00px;top:1249.50px;height:18.56px;line-height:18.56px;font-size:12.38px;color:#fff;letter-spacing:0.648px;">LF</div>
<div class="a t " style="left:1502.50px;top:1252.00px;height:18.56px;line-height:18.56px;font-size:12.38px;color:#fff;letter-spacing:2.192px;">行12，列55</div>
<div class="a t " style="left:1610.00px;top:1252.00px;height:18.56px;line-height:18.56px;font-size:12.38px;color:#fff;letter-spacing:2.670px;">历史版本: 1份</div>
<div class="a t " style="left:1737.50px;top:1252.00px;height:18.56px;line-height:18.56px;font-size:12.38px;color:#fff;letter-spacing:2.893px;">制表符: 4</div>
<div class="a t " style="left:1832.50px;top:1252.00px;height:18.56px;line-height:18.56px;font-size:12.38px;color:#fff;letter-spacing:2.345px;">编码: ascii</div>
<div class="a t " style="left:1937.50px;top:1252.00px;height:18.56px;line-height:18.56px;font-size:12.38px;color:#fff;letter-spacing:2.560px;">语言: PHP</div>
<div class="a " style="left:1437.50px;top:1242.50px;width:1.12px;height:34.75px;background:#4b4b4b;"></div>
<div class="a " style="left:1490.25px;top:1242.50px;width:1.12px;height:34.75px;background:#4b4b4b;"></div>
<div class="a " style="left:1596.00px;top:1242.50px;width:1.12px;height:34.75px;background:#4b4b4b;"></div>
<div class="a " style="left:1721.25px;top:1242.50px;width:1.12px;height:34.75px;background:#4b4b4b;"></div>
<div class="a " style="left:1820.00px;top:1242.50px;width:1.12px;height:34.75px;background:#4b4b4b;"></div>
<div class="a " style="left:1922.50px;top:1242.50px;width:1.12px;height:34.75px;background:#4b4b4b;"></div>
<div class="a " style="left:2023.25px;top:1242.50px;width:1.12px;height:34.75px;background:#4b4b4b;"></div>
<div class="a " style="left:846.00px;top:650.00px;width:15.75px;height:49.00px;background:#1c1c1c;border-radius:0 7.50px 7.50px 0;"></div>
<svg class="a" style="left:849.00px;top:668.50px;width:7.50px;height:12.00px;" viewBox="0 0 7 11"><path d="M5.500 1L1.500 5.500l4 4.500" fill="none" stroke="#fff" stroke-width="1.600"/></svg>
<div class="a " style="left:2257.00px;top:1234.75px;width:210.50px;height:87.50px;background:#f9f9f9;border-radius:5.00px;box-shadow:0 1.50px 7.50px rgba(0,0,0,.18);"></div>
<svg class="a" style="left:2270.75px;top:1248.75px;width:18.50px;height:18.50px;" viewBox="0 0 16 16"><path d="M8 1.500l5.500 3v6.500L8 14.500 2.500 11V4.500z" fill="#444"/><path d="M8 1.500l5.500 3L8 8 2.500 4.500z" fill="#777"/><path d="M5 3.200l5.800 3.300M8 8v6.500" stroke="#222" stroke-width=".8"/></svg>
<svg class="a" style="left:2312.25px;top:1248.75px;width:18.50px;height:18.50px;" viewBox="0 0 16 16"><rect x="1" y="1" width="14" height="14" rx="3" fill="#1ecd5e"/><ellipse cx="6.800" cy="7" rx="3.600" ry="3" fill="#fff"/><ellipse cx="10.400" cy="9.600" rx="2.800" ry="2.300" fill="#e8fbef"/></svg>
<svg class="a" style="left:2352.75px;top:1248.75px;width:18.50px;height:18.50px;" viewBox="0 0 16 16"><circle cx="8" cy="8" r="6.600" fill="#f58220"/><path d="M8 1.400A6.600 6.600 0 0 0 4 13.200c2-2 2.500-5 4-11.800z" fill="#fbb36a"/><path d="M8 8l5.500-3.500A6.600 6.600 0 0 1 12 13z" fill="#e5501e"/></svg>
<svg class="a" style="left:2393.75px;top:1248.75px;width:18.50px;height:18.50px;" viewBox="0 0 16 16"><path d="M2.500 5l1.500-2.500 2 1.500h4l2-1.500L13.500 5v6.500c0 1.500-1 2.500-2.500 2.500H5c-1.500 0-2.500-1-2.500-2.500z" fill="#f2a531"/><circle cx="5.800" cy="8" r="1.700" fill="#5a3a10"/><circle cx="10.200" cy="8" r="1.700" fill="#5a3a10"/><path d="M5 11.500h6" stroke="#5a3a10" stroke-width="1"/></svg>
<svg class="a" style="left:2434.50px;top:1248.75px;width:18.50px;height:18.50px;" viewBox="0 0 16 16"><circle cx="8" cy="8" r="6.800" fill="#14315c"/><circle cx="10" cy="6.400" r="2.400" fill="none" stroke="#fff" stroke-width="1.200"/><circle cx="6" cy="10.200" r="1.700" fill="#fff"/><path d="M1.500 7.500l4.500 2" stroke="#fff" stroke-width="1.600"/></svg>
<svg class="a" style="left:2270.50px;top:1289.00px;width:18.50px;height:18.50px;" viewBox="0 0 16 16"><path d="M5 3v10M7.300 3v10M9.600 3v10M11.500 3v10" stroke="#888" stroke-width="1.200"/></svg>
<svg class="a" style="left:2312.25px;top:1289.25px;width:18.50px;height:18.50px;" viewBox="0 0 16 16"><rect x="1" y="1" width="14" height="14" fill="#15211a"/><path d="M4 10.500c-1-1.500-.500-4 2.500-4.500 2.500-.3 4.500.8 5.500 2.500-1 2-3 2.800-5 2.500-1.200-.2-2-1-2-2 0-1.200 1.200-1.800 2.300-1.600" fill="none" stroke="#76b900" stroke-width="1.300"/></svg>
<svg class="a" style="left:0;top:0;width:2560.00px;height:1332.50px;" viewBox="0 0 1024 533"><polygon points="98.60,99.50 228.26,50.44 227.77,53.32 236.20,45.50 224.71,45.50 227.01,47.28" fill="#f4474e"/><polygon points="91.00,192.70 52.69,168.20 55.25,166.80 43.90,165.00 50.99,174.04 50.97,171.13" fill="#f4474e"/><polygon points="196.10,345.50 266.30,301.26 266.69,304.35 272.40,295.20 261.74,296.84 264.43,298.42" fill="#f4474e"/><polygon points="363.30,227.80 394.28,189.85 395.37,192.56 398.50,181.50 388.68,187.48 391.58,187.80" fill="#f4474e"/></svg>
</div></body></html>
